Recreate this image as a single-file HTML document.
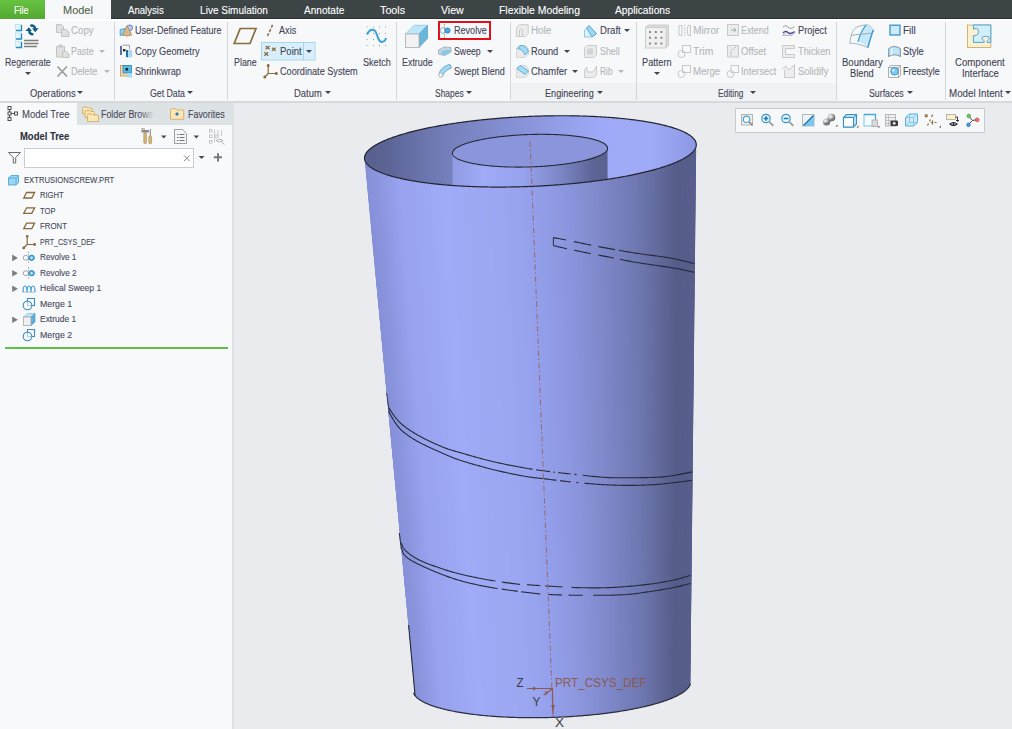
<!DOCTYPE html>
<html><head><meta charset="utf-8">
<style>
html,body{margin:0;padding:0;width:1012px;height:729px;overflow:hidden;background:#e9ebee;font-family:"Liberation Sans",sans-serif;}
#root{position:relative;width:1012px;height:729px;overflow:hidden;}
.a{position:absolute;}
.t{position:absolute;white-space:nowrap;line-height:1;font-family:"Liberation Sans",sans-serif;transform-origin:0 0;-webkit-text-stroke:0.1px currentColor;}
.sep{position:absolute;width:1px;background:#d3d6d9;top:22px;height:78px;}
.arr{position:absolute;width:0;height:0;border-left:3px solid transparent;border-right:3px solid transparent;border-top:3px solid #4a4c55;}
svg{position:absolute;overflow:visible;}
</style></head><body><div id="root">
<div class="a" style="left:0;top:0;width:1012px;height:19px;background:#3c4446;"></div>
<div class="a" style="left:0;top:0;width:45px;height:19px;background:linear-gradient(#66c341,#54a831);"></div>
<div class="a" style="left:45px;top:0;width:66px;height:19px;background:#f7f8f9;"></div>
<div class="a" style="left:0;top:19px;width:1012px;height:82px;background:#f7f8f9;"></div>
<div class="a" style="left:511px;top:83px;width:325px;height:18px;background:#f0f2f4;"></div>
<div class="a" style="left:111px;top:18px;width:901px;height:1px;background:#2c3234;"></div>
<div class="a" style="left:0;top:19px;width:1012px;height:2px;background:#ffffff;"></div>
<div class="a" style="left:0;top:101px;width:1012px;height:2px;background:#d6dadd;"></div>
<!-- graphics area -->
<div class="a" style="left:234px;top:103px;width:778px;height:626px;background:#e9ebee;"></div>
<svg class="a" style="left:0;top:0" width="1012" height="729" viewBox="0 0 1012 729">
<defs>
<clipPath id="bodyclip"><polygon points="364.55,158.41 364.54,157.95 364.57,157.49 364.62,157.03 364.70,156.56 364.81,156.10 364.95,155.63 365.11,155.17 365.31,154.70 365.53,154.23 365.79,153.77 366.07,153.30 366.37,152.83 366.71,152.36 367.08,151.89 367.47,151.42 367.89,150.95 368.34,150.49 368.82,150.02 369.33,149.55 369.86,149.08 370.42,148.61 371.01,148.15 371.63,147.68 372.27,147.21 372.95,146.75 373.64,146.28 374.37,145.82 375.12,145.36 375.90,144.90 376.71,144.44 377.54,143.98 378.40,143.52 379.29,143.06 380.20,142.61 381.14,142.15 382.10,141.70 383.09,141.25 384.10,140.80 385.14,140.36 386.21,139.91 387.30,139.47 388.41,139.03 389.55,138.59 390.72,138.15 391.90,137.72 393.11,137.29 394.35,136.86 395.61,136.43 396.89,136.01 398.19,135.59 399.52,135.17 400.87,134.75 402.25,134.34 403.64,133.93 405.06,133.52 406.50,133.12 407.96,132.72 409.44,132.32 410.94,131.92 412.46,131.53 414.01,131.14 415.57,130.76 417.15,130.38 418.75,130.00 420.38,129.63 422.02,129.26 423.68,128.89 425.35,128.53 427.05,128.18 428.77,127.82 430.50,127.47 432.25,127.13 434.01,126.79 435.79,126.45 437.59,126.12 439.41,125.79 441.24,125.46 443.08,125.14 444.95,124.83 446.82,124.52 448.71,124.21 450.62,123.91 452.53,123.61 454.47,123.32 456.41,123.04 458.37,122.75 460.34,122.48 462.32,122.21 464.31,121.94 466.32,121.68 468.34,121.42 470.36,121.17 472.40,120.92 474.45,120.68 476.50,120.45 478.57,120.22 480.65,119.99 482.73,119.77 484.82,119.56 486.92,119.35 489.03,119.15 491.15,118.95 493.27,118.76 495.39,118.57 497.53,118.39 499.67,118.22 501.81,118.05 503.96,117.89 506.12,117.73 508.28,117.58 510.44,117.43 512.61,117.29 514.77,117.16 516.95,117.03 519.12,116.91 521.30,116.79 523.47,116.68 525.65,116.58 527.83,116.48 530.01,116.39 532.19,116.30 534.37,116.22 536.55,116.15 538.73,116.08 540.91,116.02 543.08,115.96 545.25,115.91 547.42,115.87 549.59,115.83 551.75,115.80 553.91,115.77 556.07,115.76 558.22,115.74 560.37,115.74 562.51,115.74 564.65,115.74 566.78,115.75 568.90,115.77 571.02,115.80 573.13,115.83 575.23,115.86 577.33,115.91 579.41,115.96 581.49,116.01 583.56,116.07 585.62,116.14 587.67,116.21 589.71,116.29 591.74,116.38 593.76,116.47 595.77,116.57 597.77,116.67 599.76,116.78 601.73,116.89 603.69,117.02 605.64,117.14 607.58,117.28 609.50,117.42 611.41,117.56 613.31,117.71 615.19,117.87 617.06,118.03 618.91,118.20 620.74,118.37 622.56,118.55 624.37,118.74 626.16,118.93 627.93,119.13 629.68,119.33 631.42,119.54 633.14,119.75 634.84,119.97 636.53,120.19 638.19,120.42 639.84,120.66 641.47,120.90 643.08,121.15 644.67,121.40 646.24,121.65 647.79,121.91 649.32,122.18 650.83,122.45 652.32,122.73 653.79,123.01 655.23,123.29 656.66,123.59 658.06,123.88 659.44,124.18 660.80,124.49 662.14,124.80 663.45,125.11 664.74,125.43 666.01,125.75 667.25,126.08 668.47,126.41 669.67,126.75 670.84,127.09 671.98,127.44 673.11,127.79 674.21,128.14 675.28,128.50 676.33,128.86 677.35,129.22 678.35,129.59 679.32,129.97 680.27,130.34 681.19,130.72 682.09,131.11 682.95,131.49 683.80,131.88 684.61,132.28 685.40,132.68 686.16,133.08 686.90,133.48 687.61,133.89 688.29,134.30 688.94,134.71 689.57,135.13 690.17,135.54 690.74,135.97 691.28,136.39 691.80,136.82 692.29,137.24 692.75,137.68 693.18,138.11 693.59,138.55 693.96,138.98 694.31,139.43 694.63,139.87 694.92,140.31 695.18,140.76 695.41,141.21 695.62,141.66 695.80,142.11 695.95,142.56 696.06,143.02 696.16,143.47 696.22,143.93 696.25,144.39 690.30,684.22 690.28,684.28 690.27,684.34 690.25,684.40 690.22,684.46 690.20,684.52 690.18,684.57 690.16,684.63 690.14,684.69 690.11,684.75 690.09,684.81 690.07,684.87 690.04,684.93 690.02,684.99 689.99,685.05 689.97,685.10 689.94,685.16 689.91,685.22 689.89,685.28 689.86,685.34 689.83,685.40 689.80,685.46 689.77,685.52 689.74,685.58 689.71,685.63 689.68,685.69 689.65,685.75 689.62,685.81 689.59,685.87 689.55,685.93 689.52,685.99 689.49,686.05 689.45,686.10 689.42,686.16 689.38,686.22 689.35,686.28 689.31,686.34 689.28,686.40 689.24,686.46 689.20,686.52 689.16,686.58 689.12,686.63 689.09,686.69 689.05,686.75 689.01,686.81 688.97,686.87 688.93,686.93 688.88,686.99 688.84,687.05 688.80,687.11 688.76,687.16 688.71,687.22 688.67,687.28 688.63,687.34 688.58,687.40 688.54,687.46 688.49,687.52 688.45,687.58 688.40,687.64 688.35,687.69 688.30,687.75 688.26,687.81 688.21,687.87 688.16,687.93 688.11,687.99 688.06,688.05 688.01,688.11 687.96,688.16 687.91,688.22 687.86,688.28 687.80,688.34 687.75,688.40 687.70,688.46 687.64,688.52 687.59,688.58 687.53,688.63 687.48,688.69 687.42,688.75 687.37,688.81 687.31,688.87 687.25,688.93 687.20,688.99 687.14,689.05 687.08,689.10 687.02,689.16 686.96,689.22 686.90,689.28 686.84,689.34 686.78,689.40 686.72,689.46 686.66,689.51 686.60,689.57 686.53,689.63 686.47,689.69 686.41,689.75 686.34,689.81 686.28,689.87 686.21,689.92 686.15,689.98 686.08,690.04 686.01,690.10 685.95,690.16 685.88,690.22 685.81,690.27 685.74,690.33 685.67,690.39 685.61,690.45 685.54,690.51 685.47,690.57 685.39,690.63 685.32,690.68 685.25,690.74 685.18,690.80 685.11,690.86 685.03,690.92 684.96,690.97 684.89,691.03 684.81,691.09 684.74,691.15 684.66,691.21 684.59,691.27 684.51,691.32 684.43,691.38 684.36,691.44 684.28,691.50 684.20,691.56 684.12,691.61 684.04,691.67 683.96,691.73 683.88,691.79 683.80,691.85 683.72,691.90 683.64,691.96 683.56,692.02 683.48,692.08 683.39,692.14 683.31,692.19 683.23,692.25 683.14,692.31 683.06,692.37 682.97,692.42 682.89,692.48 682.80,692.54 682.71,692.60 682.63,692.66 682.54,692.71 682.45,692.77 682.36,692.83 682.28,692.89 682.19,692.94 682.10,693.00 682.01,693.06 681.92,693.12 681.83,693.17 681.73,693.23 681.64,693.29 681.55,693.35 681.46,693.40 681.36,693.46 681.27,693.52 681.18,693.57 681.08,693.63 680.99,693.69 680.89,693.75 680.79,693.80 680.70,693.86 680.60,693.92 680.50,693.97 680.41,694.03 680.31,694.09 680.21,694.15 680.11,694.20 680.01,694.26 679.91,694.32 679.81,694.37 679.71,694.43 679.61,694.49 679.51,694.54 679.40,694.60 679.30,694.66 679.20,694.71 679.09,694.77 678.99,694.83 678.88,694.88 678.78,694.94 678.67,695.00 678.57,695.05 678.46,695.11 678.36,695.17 678.25,695.22 678.14,695.28 678.03,695.34 677.92,695.39 677.82,695.45 677.71,695.51 677.60,695.56 677.49,695.62 677.38,695.67 677.26,695.73 677.15,695.79 677.04,695.84 676.93,695.90 676.82,695.95 676.70,696.01 676.59,696.07 676.47,696.12 676.36,696.18 676.24,696.23 676.13,696.29 676.01,696.35 675.90,696.40 675.78,696.46 675.66,696.51 675.54,696.57 675.43,696.62 675.31,696.68 675.19,696.74 675.07,696.79 674.95,696.85 674.83,696.90 674.71,696.96 674.59,697.01 674.47,697.07 674.34,697.12 674.22,697.18 674.10,697.23 673.98,697.29 673.85,697.34 673.73,697.40 673.60,697.45 673.48,697.51 673.35,697.56 673.23,697.62 673.10,697.67 672.97,697.73 672.85,697.78 672.72,697.84 672.59,697.89 672.46,697.95 672.33,698.00 672.20,698.06 672.07,698.11 671.94,698.17 671.81,698.22 671.68,698.28 671.55,698.33 671.42,698.38 671.29,698.44 671.16,698.49 671.02,698.55 670.89,698.60 670.76,698.65 670.62,698.71 670.49,698.76 670.35,698.82 670.22,698.87 670.08,698.92 669.94,698.98 669.81,699.03 669.67,699.09 669.53,699.14 669.39,699.19 669.26,699.25 669.12,699.30 668.98,699.35 668.84,699.41 668.70,699.46 668.56,699.52 668.42,699.57 668.28,699.62 668.13,699.68 667.99,699.73 667.85,699.78 667.71,699.83 667.56,699.89 667.42,699.94 667.28,699.99 667.13,700.05 666.99,700.10 666.84,700.15 666.70,700.21 666.55,700.26 666.40,700.31 666.26,700.36 666.11,700.42 665.96,700.47 665.81,700.52 665.66,700.57 665.51,700.63 665.37,700.68 665.22,700.73 665.07,700.78 664.92,700.84 664.76,700.89 664.61,700.94 664.46,700.99 664.31,701.04 664.16,701.10 664.00,701.15 663.85,701.20 663.70,701.25 663.54,701.30 663.39,701.35 663.23,701.41 663.08,701.46 662.92,701.51 662.77,701.56 662.61,701.61 662.45,701.66 662.30,701.71 662.14,701.77 661.98,701.82 661.82,701.87 661.66,701.92 661.50,701.97 661.35,702.02 661.19,702.07 661.03,702.12 660.86,702.17 660.70,702.22 660.54,702.28 660.38,702.33 660.22,702.38 660.06,702.43 659.89,702.48 659.73,702.53 659.57,702.58 659.40,702.63 659.24,702.68 659.07,702.73 658.91,702.78 658.74,702.83 658.58,702.88 658.41,702.93 658.24,702.98 658.08,703.03 657.91,703.08 657.74,703.13 657.57,703.18 657.40,703.23 657.24,703.28 657.07,703.33 656.90,703.38 656.73,703.43 656.56,703.47 656.39,703.52 656.21,703.57 656.04,703.62 655.87,703.67 655.70,703.72 655.53,703.77 655.35,703.82 655.18,703.87 655.01,703.92 654.83,703.96 654.66,704.01 654.48,704.06 654.31,704.11 654.13,704.16 653.96,704.21 653.78,704.26 653.60,704.30 653.43,704.35 653.25,704.40 653.07,704.45 652.90,704.50 652.72,704.54 652.54,704.59 652.36,704.64 652.18,704.69 652.00,704.74 651.82,704.78 651.64,704.83 651.46,704.88 651.28,704.93 651.10,704.97 650.91,705.02 650.73,705.07 650.55,705.11 650.37,705.16 650.18,705.21 650.00,705.26 649.82,705.30 649.63,705.35 649.45,705.40 649.26,705.44 649.08,705.49 648.89,705.54 648.71,705.58 648.52,705.63 648.33,705.68 648.15,705.72 647.96,705.77 647.77,705.81 647.58,705.86 647.40,705.91 647.21,705.95 647.02,706.00 646.83,706.04 646.64,706.09 646.45,706.13 646.26,706.18 646.07,706.23 645.88,706.27 645.69,706.32 645.50,706.36 645.30,706.41 645.11,706.45 644.92,706.50 644.73,706.54 644.53,706.59 644.34,706.63 644.14,706.68 643.95,706.72 643.76,706.77 643.56,706.81 643.37,706.86 643.17,706.90 642.98,706.94 642.78,706.99 642.58,707.03 642.39,707.08 642.19,707.12 641.99,707.17 641.79,707.21 641.60,707.25 641.40,707.30 641.20,707.34 641.00,707.38 640.80,707.43 640.60,707.47 640.40,707.52 640.20,707.56 640.00,707.60 639.80,707.65 639.60,707.69 639.40,707.73 639.20,707.77 638.99,707.82 638.79,707.86 638.59,707.90 638.39,707.95 638.18,707.99 637.98,708.03 637.77,708.07 637.57,708.12 637.37,708.16 637.16,708.20 636.96,708.24 636.75,708.28 636.55,708.33 636.34,708.37 636.13,708.41 635.93,708.45 635.72,708.49 635.51,708.53 635.31,708.58 635.10,708.62 634.89,708.66 634.68,708.70 634.47,708.74 634.26,708.78 634.06,708.82 633.85,708.86 633.64,708.91 633.43,708.95 633.22,708.99 633.00,709.03 632.79,709.07 632.58,709.11 632.37,709.15 632.16,709.19 631.95,709.23 631.74,709.27 631.52,709.31 631.31,709.35 631.10,709.39 630.88,709.43 630.67,709.47 630.46,709.51 630.24,709.55 630.03,709.59 629.81,709.63 629.60,709.67 629.38,709.71 629.17,709.75 628.95,709.79 628.73,709.82 628.52,709.86 628.30,709.90 628.08,709.94 627.87,709.98 627.65,710.02 627.43,710.06 627.21,710.10 627.00,710.13 626.78,710.17 626.56,710.21 626.34,710.25 626.12,710.29 625.90,710.32 625.68,710.36 625.46,710.40 625.24,710.44 625.02,710.48 624.80,710.51 624.58,710.55 624.36,710.59 624.14,710.62 623.91,710.66 623.69,710.70 623.47,710.74 623.25,710.77 623.02,710.81 622.80,710.85 622.58,710.88 622.35,710.92 622.13,710.96 621.91,710.99 621.68,711.03 621.46,711.07 621.23,711.10 621.01,711.14 620.78,711.17 620.56,711.21 620.33,711.25 620.10,711.28 619.88,711.32 619.65,711.35 619.42,711.39 619.20,711.42 618.97,711.46 618.74,711.49 618.51,711.53 618.29,711.56 618.06,711.60 617.83,711.63 617.60,711.67 617.37,711.70 617.14,711.74 616.91,711.77 616.69,711.81 616.46,711.84 616.23,711.87 616.00,711.91 615.76,711.94 615.53,711.98 615.30,712.01 615.07,712.04 614.84,712.08 614.61,712.11 614.38,712.15 614.15,712.18 613.91,712.21 613.68,712.25 613.45,712.28 613.22,712.31 612.98,712.34 612.75,712.38 612.52,712.41 612.28,712.44 612.05,712.48 611.81,712.51 611.58,712.54 611.34,712.57 611.11,712.60 610.87,712.64 610.64,712.67 610.40,712.70 610.17,712.73 609.93,712.76 609.70,712.80 609.46,712.83 609.22,712.86 608.99,712.89 608.75,712.92 608.51,712.95 608.28,712.98 608.04,713.01 607.80,713.05 607.56,713.08 607.33,713.11 607.09,713.14 606.85,713.17 606.61,713.20 606.37,713.23 606.13,713.26 605.89,713.29 605.65,713.32 605.42,713.35 605.18,713.38 604.94,713.41 604.70,713.44 604.46,713.47 604.22,713.50 603.97,713.53 603.73,713.56 603.49,713.59 603.25,713.61 603.01,713.64 602.77,713.67 602.53,713.70 602.29,713.73 602.04,713.76 601.80,713.79 601.56,713.82 601.32,713.84 601.07,713.87 600.83,713.90 600.59,713.93 600.34,713.96 600.10,713.98 599.86,714.01 599.61,714.04 599.37,714.07 599.13,714.09 598.88,714.12 598.64,714.15 598.39,714.18 598.15,714.20 597.90,714.23 597.66,714.26 597.41,714.28 597.17,714.31 596.92,714.34 596.68,714.36 596.43,714.39 596.18,714.42 595.94,714.44 595.69,714.47 595.44,714.49 595.20,714.52 594.95,714.55 594.70,714.57 594.46,714.60 594.21,714.62 593.96,714.65 593.71,714.67 593.47,714.70 593.22,714.72 592.97,714.75 592.72,714.77 592.47,714.80 592.23,714.82 591.98,714.85 591.73,714.87 591.48,714.90 591.23,714.92 590.98,714.95 590.73,714.97 590.48,714.99 590.23,715.02 589.98,715.04 589.73,715.07 589.48,715.09 589.23,715.11 588.98,715.14 588.73,715.16 588.48,715.18 588.23,715.21 587.98,715.23 587.73,715.25 587.48,715.27 587.23,715.30 586.98,715.32 586.73,715.34 586.48,715.36 586.22,715.39 585.97,715.41 585.72,715.43 585.47,715.45 585.22,715.47 584.96,715.50 584.71,715.52 584.46,715.54 584.21,715.56 583.95,715.58 583.70,715.60 583.45,715.62 583.20,715.65 582.94,715.67 582.69,715.69 582.44,715.71 582.18,715.73 581.93,715.75 581.68,715.77 581.42,715.79 581.17,715.81 580.92,715.83 580.66,715.85 580.41,715.87 580.15,715.89 579.90,715.91 579.64,715.93 579.39,715.95 579.14,715.97 578.88,715.99 578.63,716.01 578.37,716.03 578.12,716.04 577.86,716.06 577.61,716.08 577.35,716.10 577.10,716.12 576.84,716.14 576.58,716.16 576.33,716.17 576.07,716.19 575.82,716.21 575.56,716.23 575.31,716.25 575.05,716.26 574.79,716.28 574.54,716.30 574.28,716.32 574.02,716.33 573.77,716.35 573.51,716.37 573.26,716.38 573.00,716.40 572.74,716.42 572.49,716.44 572.23,716.45 571.97,716.47 571.71,716.48 571.46,716.50 571.20,716.52 570.94,716.53 570.69,716.55 570.43,716.56 570.17,716.58 569.91,716.60 569.66,716.61 569.40,716.63 569.14,716.64 568.88,716.66 568.63,716.67 568.37,716.69 568.11,716.70 567.85,716.72 567.59,716.73 567.34,716.75 567.08,716.76 566.82,716.77 566.56,716.79 566.30,716.80 566.05,716.82 565.79,716.83 565.53,716.84 565.27,716.86 565.01,716.87 564.75,716.89 564.49,716.90 564.24,716.91 563.98,716.93 563.72,716.94 563.46,716.95 563.20,716.96 562.94,716.98 562.68,716.99 562.42,717.00 562.17,717.01 561.91,717.03 561.65,717.04 561.39,717.05 561.13,717.06 560.87,717.07 560.61,717.09 560.35,717.10 560.09,717.11 559.83,717.12 559.57,717.13 559.31,717.14 559.06,717.15 558.80,717.17 558.54,717.18 558.28,717.19 558.02,717.20 557.76,717.21 557.50,717.22 557.24,717.23 556.98,717.24 556.72,717.25 556.46,717.26 556.20,717.27 555.94,717.28 555.68,717.29 555.42,717.30 555.16,717.31 554.90,717.32 554.64,717.33 554.38,717.34 554.12,717.34 553.87,717.35 553.61,717.36 553.35,717.37 553.09,717.38 552.83,717.39 552.57,717.40 552.31,717.40 552.05,717.41 551.79,717.42 551.53,717.43 551.27,717.44 551.01,717.44 550.75,717.45 550.49,717.46 550.23,717.47 549.97,717.47 549.71,717.48 549.45,717.49 549.19,717.49 548.93,717.50 548.67,717.51 548.41,717.52 548.15,717.52 547.89,717.53 547.63,717.53 547.37,717.54 547.12,717.55 546.86,717.55 546.60,717.56 546.34,717.56 546.08,717.57 545.82,717.58 545.56,717.58 545.30,717.59 545.04,717.59 544.78,717.60 544.52,717.60 544.26,717.61 544.00,717.61 543.74,717.62 543.48,717.62 543.22,717.62 542.97,717.63 542.71,717.63 542.45,717.64 542.19,717.64 541.93,717.64 541.67,717.65 541.41,717.65 541.15,717.66 540.89,717.66 540.63,717.66 540.38,717.67 540.12,717.67 539.86,717.67 539.60,717.67 539.34,717.68 539.08,717.68 538.82,717.68 538.57,717.69 538.31,717.69 538.05,717.69 537.79,717.69 537.53,717.69 537.27,717.70 537.02,717.70 536.76,717.70 536.50,717.70 536.24,717.70 535.98,717.70 535.73,717.70 535.47,717.71 535.21,717.71 534.95,717.71 534.69,717.71 534.44,717.71 534.18,717.71 533.92,717.71 533.66,717.71 533.41,717.71 533.15,717.71 532.89,717.71 532.64,717.71 532.38,717.71 532.12,717.71 531.86,717.71 531.61,717.71 531.35,717.71 531.09,717.71 530.84,717.71 530.58,717.71 530.32,717.71 530.07,717.70 529.81,717.70 529.56,717.70 529.30,717.70 529.04,717.70 528.79,717.70 528.53,717.69 528.27,717.69 528.02,717.69 527.76,717.69 527.51,717.69 527.25,717.68 527.00,717.68 526.74,717.68 526.49,717.68 526.23,717.67 525.98,717.67 525.72,717.67 525.47,717.66 525.21,717.66 524.96,717.66 524.70,717.65 524.45,717.65 524.19,717.65 523.94,717.64 523.68,717.64 523.43,717.63 523.18,717.63 522.92,717.63 522.67,717.62 522.41,717.62 522.16,717.61 521.91,717.61 521.65,717.60 521.40,717.60 521.15,717.59 520.89,717.59 520.64,717.58 520.39,717.58 520.13,717.57 519.88,717.57 519.63,717.56 519.38,717.55 519.12,717.55 518.87,717.54 518.62,717.54 518.37,717.53 518.12,717.52 517.86,717.52 517.61,717.51 517.36,717.50 517.11,717.50 516.86,717.49 516.61,717.48 516.36,717.48 516.11,717.47 515.85,717.46 515.60,717.45 515.35,717.45 515.10,717.44 514.85,717.43 514.60,717.42 514.35,717.42 514.10,717.41 513.85,717.40 513.60,717.39 513.35,717.38 513.10,717.37 512.86,717.37 512.61,717.36 512.36,717.35 512.11,717.34 511.86,717.33 511.61,717.32 511.36,717.31 511.11,717.30 510.87,717.29 510.62,717.28 510.37,717.27 510.12,717.26 509.88,717.25 509.63,717.24 509.38,717.23 509.13,717.22 508.89,717.21 508.64,717.20 508.39,717.19 508.15,717.18 507.90,717.17 507.65,717.16 507.41,717.15 507.16,717.14 506.92,717.12 506.67,717.11 506.43,717.10 506.18,717.09 505.94,717.08 505.69,717.07 505.45,717.05 505.20,717.04 504.96,717.03 504.71,717.02 504.47,717.01 504.23,716.99 503.98,716.98 503.74,716.97 503.49,716.96 503.25,716.94 503.01,716.93 502.77,716.92 502.52,716.90 502.28,716.89 502.04,716.88 501.80,716.86 501.55,716.85 501.31,716.84 501.07,716.82 500.83,716.81 500.59,716.79 500.35,716.78 500.11,716.77 499.86,716.75 499.62,716.74 499.38,716.72 499.14,716.71 498.90,716.69 498.66,716.68 498.42,716.66 498.18,716.65 497.94,716.63 497.71,716.62 497.47,716.60 497.23,716.59 496.99,716.57 496.75,716.55 496.51,716.54 496.28,716.52 496.04,716.51 495.80,716.49 495.56,716.47 495.33,716.46 495.09,716.44 494.85,716.42 494.62,716.41 494.38,716.39 494.14,716.37 493.91,716.36 493.67,716.34 493.44,716.32 493.20,716.31 492.96,716.29 492.73,716.27 492.50,716.25 492.26,716.23 492.03,716.22 491.79,716.20 491.56,716.18 491.32,716.16 491.09,716.14 490.86,716.13 490.63,716.11 490.39,716.09 490.16,716.07 489.93,716.05 489.70,716.03 489.46,716.01 489.23,715.99 489.00,715.98 488.77,715.96 488.54,715.94 488.31,715.92 488.08,715.90 487.85,715.88 487.62,715.86 487.39,715.84 487.16,715.82 486.93,715.80 486.70,715.78 486.47,715.76 486.24,715.74 486.01,715.72 485.78,715.69 485.55,715.67 485.33,715.65 485.10,715.63 484.87,715.61 484.64,715.59 484.42,715.57 484.19,715.55 483.96,715.53 483.74,715.50 483.51,715.48 483.29,715.46 483.06,715.44 482.83,715.42 482.61,715.39 482.39,715.37 482.16,715.35 481.94,715.33 481.71,715.30 481.49,715.28 481.26,715.26 481.04,715.24 480.82,715.21 480.60,715.19 480.37,715.17 480.15,715.14 479.93,715.12 479.71,715.10 479.49,715.07 479.26,715.05 479.04,715.03 478.82,715.00 478.60,714.98 478.38,714.95 478.16,714.93 477.94,714.91 477.72,714.88 477.50,714.86 477.28,714.83 477.07,714.81 476.85,714.78 476.63,714.76 476.41,714.73 476.19,714.71 475.98,714.68 475.76,714.66 475.54,714.63 475.32,714.61 475.11,714.58 474.89,714.56 474.68,714.53 474.46,714.50 474.25,714.48 474.03,714.45 473.82,714.43 473.60,714.40 473.39,714.37 473.17,714.35 472.96,714.32 472.75,714.29 472.53,714.27 472.32,714.24 472.11,714.21 471.90,714.19 471.68,714.16 471.47,714.13 471.26,714.10 471.05,714.08 470.84,714.05 470.63,714.02 470.42,713.99 470.21,713.97 470.00,713.94 469.79,713.91 469.58,713.88 469.37,713.85 469.16,713.83 468.95,713.80 468.75,713.77 468.54,713.74 468.33,713.71 468.12,713.68 467.92,713.65 467.71,713.63 467.51,713.60 467.30,713.57 467.09,713.54 466.89,713.51 466.68,713.48 466.48,713.45 466.27,713.42 466.07,713.39 465.87,713.36 465.66,713.33 465.46,713.30 465.26,713.27 465.05,713.24 464.85,713.21 464.65,713.18 464.45,713.15 464.25,713.12 464.05,713.09 463.85,713.06 463.64,713.03 463.44,713.00 463.24,712.96 463.05,712.93 462.85,712.90 462.65,712.87 462.45,712.84 462.25,712.81 462.05,712.78 461.85,712.74 461.66,712.71 461.46,712.68 461.26,712.65 461.07,712.62 460.87,712.58 460.68,712.55 460.48,712.52 460.29,712.49 460.09,712.45 459.90,712.42 459.70,712.39 459.51,712.36 459.31,712.32 459.12,712.29 458.93,712.26 458.74,712.22 458.54,712.19 458.35,712.16 458.16,712.12 457.97,712.09 457.78,712.06 457.59,712.02 457.40,711.99 457.21,711.96 457.02,711.92 456.83,711.89 456.64,711.85 456.45,711.82 456.26,711.78 456.08,711.75 455.89,711.72 455.70,711.68 455.51,711.65 455.33,711.61 455.14,711.58 454.96,711.54 454.77,711.51 454.59,711.47 454.40,711.44 454.22,711.40 454.03,711.37 453.85,711.33 453.66,711.29 453.48,711.26 453.30,711.22 453.12,711.19 452.93,711.15 452.75,711.11 452.57,711.08 452.39,711.04 452.21,711.01 452.03,710.97 451.85,710.93 451.67,710.90 451.49,710.86 451.31,710.82 451.13,710.79 450.95,710.75 450.78,710.71 450.60,710.68 450.42,710.64 450.24,710.60 450.07,710.56 449.89,710.53 449.72,710.49 449.54,710.45 449.37,710.41 449.19,710.38 449.02,710.34 448.84,710.30 448.67,710.26 448.50,710.22 448.32,710.19 448.15,710.15 447.98,710.11 447.81,710.07 447.64,710.03 447.47,709.99 447.29,709.96 447.12,709.92 446.95,709.88 446.78,709.84 446.62,709.80 446.45,709.76 446.28,709.72 446.11,709.68 445.94,709.64 445.78,709.60 445.61,709.56 445.44,709.52 445.28,709.48 445.11,709.44 444.94,709.41 444.78,709.37 444.61,709.33 444.45,709.29 444.29,709.24 444.12,709.20 443.96,709.16 443.80,709.12 443.63,709.08 443.47,709.04 443.31,709.00 443.15,708.96 442.99,708.92 442.83,708.88 442.67,708.84 442.51,708.80 442.35,708.76 442.19,708.72 442.03,708.67 441.87,708.63 441.71,708.59 441.56,708.55 441.40,708.51 441.24,708.47 441.09,708.43 440.93,708.38 440.77,708.34 440.62,708.30 440.47,708.26 440.31,708.22 440.16,708.17 440.00,708.13 439.85,708.09 439.70,708.05 439.54,708.00 439.39,707.96 439.24,707.92 439.09,707.88 438.94,707.83 438.79,707.79 438.64,707.75 438.49,707.70 438.34,707.66 438.19,707.62 438.04,707.57 437.89,707.53 437.75,707.49 437.60,707.44 437.45,707.40 437.31,707.36 437.16,707.31 437.01,707.27 436.87,707.23 436.72,707.18 436.58,707.14 436.44,707.09 436.29,707.05 436.15,707.01 436.01,706.96 435.86,706.92 435.72,706.87 435.58,706.83 435.44,706.78 435.30,706.74 435.16,706.69 435.02,706.65 434.88,706.60 434.74,706.56 434.60,706.51 434.46,706.47 434.32,706.42 434.19,706.38 434.05,706.33 433.91,706.29 433.78,706.24 433.64,706.20 433.51,706.15 433.37,706.11 433.24,706.06 433.10,706.01 432.97,705.97 432.83,705.92 432.70,705.88 432.57,705.83 432.44,705.78 432.31,705.74 432.17,705.69 432.04,705.65 431.91,705.60 431.78,705.55 431.65,705.51 431.52,705.46 431.40,705.41 431.27,705.37 431.14,705.32 431.01,705.27 430.88,705.23 430.76,705.18 430.63,705.13 430.51,705.08 430.38,705.04 430.26,704.99 430.13,704.94 430.01,704.90 429.88,704.85 429.76,704.80 429.64,704.75 429.52,704.71 429.39,704.66 429.27,704.61 429.15,704.56 429.03,704.51 428.91,704.47 428.79,704.42 428.67,704.37 428.55,704.32 428.43,704.27 428.32,704.22 428.20,704.18 428.08,704.13 427.96,704.08 427.85,704.03 427.73,703.98 427.62,703.93 427.50,703.89 427.39,703.84 427.27,703.79 427.16,703.74 427.05,703.69 426.93,703.64 426.82,703.59 426.71,703.54 426.60,703.49 426.49,703.44 426.38,703.39 426.27,703.34 426.16,703.30 426.05,703.25 425.94,703.20 425.83,703.15 425.72,703.10 425.61,703.05 425.51,703.00 425.40,702.95 425.29,702.90 425.19,702.85 425.08,702.80 424.98,702.75 424.87,702.70 424.77,702.65 424.67,702.60 424.56,702.55 424.46,702.50 424.36,702.45 424.26,702.40 424.15,702.34 424.05,702.29 423.95,702.24 423.85,702.19 423.75,702.14 423.65,702.09 423.56,702.04 423.46,701.99 423.36,701.94 423.26,701.89 423.17,701.84 423.07,701.78 422.97,701.73 422.88,701.68 422.78,701.63 422.69,701.58 422.59,701.53 422.50,701.48 422.41,701.42 422.31,701.37 422.22,701.32 422.13,701.27 422.04,701.22 421.95,701.17 421.86,701.11 421.77,701.06 421.68,701.01 421.59,700.96 421.50,700.91 421.41,700.85 421.32,700.80 421.24,700.75 421.15,700.70 421.06,700.65 420.98,700.59 420.89,700.54 420.81,700.49 420.72,700.44 420.64,700.38 420.56,700.33 420.47,700.28 420.39,700.22 420.31,700.17 420.23,700.12 420.14,700.07 420.06,700.01 419.98,699.96 419.90,699.91 419.82,699.85 419.75,699.80 419.67,699.75 419.59,699.69 419.51,699.64 419.43,699.59 419.36,699.53 419.28,699.48 419.21,699.43 419.13,699.37 419.05,699.32 418.98,699.27 418.91,699.21 418.83,699.16 418.76,699.11 418.69,699.05 418.62,699.00 418.54,698.94 418.47,698.89 418.40,698.84 418.33,698.78 418.26,698.73 418.19,698.67 418.12,698.62 418.06,698.57 417.99,698.51 417.92,698.46 417.85,698.40 417.79,698.35 417.72,698.30 417.66,698.24 417.59,698.19 417.53,698.13 417.46,698.08 417.40,698.02 417.34,697.97 417.27,697.91 417.21,697.86 417.15,697.80 417.09,697.75 417.03,697.69 416.97,697.64 416.91,697.58 416.85,697.53 416.79,697.47 416.73,697.42 416.67,697.36 416.62,697.31 416.56,697.25 416.50,697.20 416.45,697.14 416.39,697.09 416.34,697.03 416.28,696.98 416.23,696.92 416.17,696.87 416.12,696.81 416.07,696.76 416.02,696.70 415.96,696.64 415.91,696.59 415.86,696.53 415.81,696.48 415.76,696.42 415.71,696.37 415.66,696.31 415.62,696.25 415.57,696.20 415.52,696.14 415.47,696.09 415.43,696.03 415.38,695.98 415.34,695.92 415.29,695.86 415.25,695.81 415.20,695.75 415.16,695.69 415.11,695.64"/></clipPath>
<clipPath id="topclip"><polygon points="696.25,144.39 696.26,144.70 696.25,145.00 696.23,145.31 696.20,145.62 696.16,145.92 696.10,146.23 696.03,146.54 695.95,146.85 695.86,147.16 695.75,147.47 695.63,147.77 695.50,148.08 695.35,148.39 695.20,148.70 695.03,149.02 694.84,149.33 694.65,149.64 694.44,149.95 694.22,150.26 693.99,150.57 693.74,150.88 693.49,151.19 693.22,151.50 692.93,151.81 692.64,152.13 692.33,152.44 692.01,152.75 691.68,153.06 691.34,153.37 690.98,153.68 690.61,153.99 690.23,154.30 689.84,154.61 689.44,154.92 689.02,155.23 688.59,155.54 688.15,155.85 687.70,156.16 687.23,156.47 686.76,156.77 686.27,157.08 685.77,157.39 685.25,157.69 684.73,158.00 684.19,158.31 683.64,158.61 683.09,158.92 682.51,159.22 681.93,159.52 681.34,159.83 680.73,160.13 680.11,160.43 679.49,160.73 678.85,161.03 678.19,161.33 677.53,161.63 676.86,161.93 676.17,162.22 675.48,162.52 674.77,162.81 674.05,163.11 673.32,163.40 672.58,163.69 671.83,163.99 671.07,164.28 670.30,164.57 669.52,164.86 668.72,165.14 667.92,165.43 667.11,165.72 666.28,166.00 665.45,166.28 664.60,166.57 663.74,166.85 662.88,167.13 662.00,167.41 661.12,167.68 660.22,167.96 659.32,168.23 658.40,168.51 657.47,168.78 656.54,169.05 655.60,169.32 654.64,169.59 653.68,169.86 652.70,170.12 651.72,170.39 650.73,170.65 649.73,170.91 648.72,171.17 647.70,171.43 646.67,171.69 645.64,171.94 644.59,172.19 643.54,172.45 642.47,172.70 641.40,172.95 640.32,173.19 639.24,173.44 638.14,173.68 637.04,173.92 635.92,174.16 634.80,174.40 633.67,174.64 632.54,174.88 631.39,175.11 630.24,175.34 629.08,175.57 627.91,175.80 626.74,176.02 625.56,176.25 624.37,176.47 623.17,176.69 621.97,176.91 620.76,177.13 619.54,177.34 618.32,177.55 617.09,177.76 615.85,177.97 614.61,178.18 613.36,178.38 612.10,178.59 610.84,178.79 609.57,178.98 608.29,179.18 607.01,179.38 605.73,179.57 604.43,179.76 603.13,179.94 601.83,180.13 600.52,180.31 599.21,180.49 597.89,180.67 596.56,180.85 595.23,181.02 593.90,181.20 592.56,181.37 591.22,181.53 589.87,181.70 588.51,181.86 587.16,182.02 585.79,182.18 584.43,182.34 583.06,182.49 581.68,182.64 580.30,182.79 578.92,182.94 577.54,183.08 576.15,183.22 574.75,183.36 573.36,183.50 571.96,183.63 570.55,183.77 569.15,183.90 567.74,184.02 566.33,184.15 564.91,184.27 563.50,184.39 562.08,184.51 560.66,184.62 559.23,184.73 557.80,184.84 556.38,184.95 554.95,185.05 553.51,185.15 552.08,185.25 550.64,185.35 549.21,185.44 547.77,185.54 546.33,185.62 544.89,185.71 543.44,185.79 542.00,185.88 540.56,185.95 539.11,186.03 537.67,186.10 536.22,186.17 534.77,186.24 533.33,186.31 531.88,186.37 530.43,186.43 528.98,186.49 527.54,186.54 526.09,186.59 524.64,186.64 523.20,186.69 521.75,186.73 520.31,186.77 518.86,186.81 517.42,186.85 515.97,186.88 514.53,186.91 513.09,186.94 511.65,186.96 510.22,186.98 508.78,187.00 507.35,187.02 505.91,187.03 504.48,187.05 503.06,187.05 501.63,187.06 500.20,187.06 498.78,187.06 497.36,187.06 495.95,187.06 494.53,187.05 493.12,187.04 491.71,187.03 490.30,187.01 488.90,186.99 487.50,186.97 486.11,186.95 484.71,186.92 483.32,186.89 481.94,186.86 480.55,186.82 479.18,186.79 477.80,186.75 476.43,186.70 475.06,186.66 473.70,186.61 472.34,186.56 470.99,186.50 469.64,186.45 468.30,186.39 466.96,186.33 465.62,186.26 464.29,186.20 462.97,186.13 461.65,186.05 460.33,185.98 459.02,185.90 457.72,185.82 456.42,185.74 455.13,185.65 453.84,185.57 452.56,185.48 451.29,185.38 450.02,185.29 448.75,185.19 447.50,185.09 446.25,184.98 445.00,184.88 443.77,184.77 442.53,184.66 441.31,184.54 440.09,184.43 438.88,184.31 437.68,184.19 436.48,184.07 435.29,183.94 434.11,183.81 432.94,183.68 431.77,183.55 430.61,183.41 429.46,183.27 428.31,183.13 427.17,182.99 426.05,182.84 424.92,182.69 423.81,182.54 422.71,182.39 421.61,182.23 420.52,182.08 419.44,181.92 418.37,181.75 417.31,181.59 416.25,181.42 415.21,181.25 414.17,181.08 413.14,180.91 412.12,180.73 411.11,180.56 410.11,180.37 409.12,180.19 408.14,180.01 407.16,179.82 406.20,179.63 405.24,179.44 404.30,179.25 403.36,179.05 402.44,178.85 401.52,178.65 400.62,178.45 399.72,178.25 398.83,178.04 397.96,177.83 397.09,177.62 396.24,177.41 395.39,177.20 394.55,176.98 393.73,176.77 392.91,176.55 392.11,176.32 391.32,176.10 390.53,175.87 389.76,175.65 389.00,175.42 388.25,175.19 387.51,174.95 386.78,174.72 386.06,174.48 385.35,174.25 384.66,174.01 383.97,173.76 383.30,173.52 382.63,173.28 381.98,173.03 381.34,172.78 380.71,172.53 380.09,172.28 379.49,172.03 378.89,171.77 378.31,171.52 377.74,171.26 377.18,171.00 376.63,170.74 376.09,170.48 375.57,170.21 375.06,169.95 374.55,169.68 374.07,169.41 373.59,169.14 373.12,168.87 372.67,168.60 372.23,168.33 371.80,168.05 371.38,167.78 370.97,167.50 370.58,167.22 370.20,166.94 369.83,166.66 369.48,166.38 369.13,166.10 368.80,165.81 368.48,165.53 368.17,165.24 367.88,164.95 367.59,164.66 367.32,164.38 367.07,164.08 366.82,163.79 366.59,163.50 366.37,163.21 366.16,162.91 365.96,162.62 365.78,162.32 365.61,162.03 365.45,161.73 365.31,161.43 365.18,161.13 365.06,160.83 364.95,160.53 364.85,160.23 364.77,159.93 364.70,159.63 364.64,159.32 364.60,159.02 364.57,158.71 364.55,158.41 364.54,158.10 364.55,157.80 364.57,157.49 364.60,157.18 364.64,156.88 364.70,156.57 364.77,156.26 364.85,155.95 364.94,155.64 365.05,155.33 365.17,155.03 365.30,154.72 365.45,154.41 365.60,154.10 365.77,153.78 365.96,153.47 366.15,153.16 366.36,152.85 366.58,152.54 366.81,152.23 367.06,151.92 367.31,151.61 367.58,151.30 367.87,150.99 368.16,150.67 368.47,150.36 368.79,150.05 369.12,149.74 369.46,149.43 369.82,149.12 370.19,148.81 370.57,148.50 370.96,148.19 371.36,147.88 371.78,147.57 372.21,147.26 372.65,146.95 373.10,146.64 373.57,146.33 374.04,146.03 374.53,145.72 375.03,145.41 375.55,145.11 376.07,144.80 376.61,144.49 377.16,144.19 377.71,143.88 378.29,143.58 378.87,143.28 379.46,142.97 380.07,142.67 380.69,142.37 381.31,142.07 381.95,141.77 382.61,141.47 383.27,141.17 383.94,140.87 384.63,140.58 385.32,140.28 386.03,139.99 386.75,139.69 387.48,139.40 388.22,139.11 388.97,138.81 389.73,138.52 390.50,138.23 391.28,137.94 392.08,137.66 392.88,137.37 393.69,137.08 394.52,136.80 395.35,136.52 396.20,136.23 397.06,135.95 397.92,135.67 398.80,135.39 399.68,135.12 400.58,134.84 401.48,134.57 402.40,134.29 403.33,134.02 404.26,133.75 405.20,133.48 406.16,133.21 407.12,132.94 408.10,132.68 409.08,132.41 410.07,132.15 411.07,131.89 412.08,131.63 413.10,131.37 414.13,131.11 415.16,130.86 416.21,130.61 417.26,130.35 418.33,130.10 419.40,129.85 420.48,129.61 421.56,129.36 422.66,129.12 423.76,128.88 424.88,128.64 426.00,128.40 427.13,128.16 428.26,127.92 429.41,127.69 430.56,127.46 431.72,127.23 432.89,127.00 434.06,126.78 435.24,126.55 436.43,126.33 437.63,126.11 438.83,125.89 440.04,125.67 441.26,125.46 442.48,125.25 443.71,125.04 444.95,124.83 446.19,124.62 447.44,124.42 448.70,124.21 449.96,124.01 451.23,123.82 452.51,123.62 453.79,123.42 455.07,123.23 456.37,123.04 457.67,122.86 458.97,122.67 460.28,122.49 461.59,122.31 462.91,122.13 464.24,121.95 465.57,121.78 466.90,121.60 468.24,121.43 469.58,121.27 470.93,121.10 472.29,120.94 473.64,120.78 475.01,120.62 476.37,120.46 477.74,120.31 479.12,120.16 480.50,120.01 481.88,119.86 483.26,119.72 484.65,119.58 486.05,119.44 487.44,119.30 488.84,119.17 490.25,119.03 491.65,118.90 493.06,118.78 494.47,118.65 495.89,118.53 497.30,118.41 498.72,118.29 500.14,118.18 501.57,118.07 503.00,117.96 504.42,117.85 505.85,117.75 507.29,117.65 508.72,117.55 510.16,117.45 511.59,117.36 513.03,117.26 514.47,117.18 515.91,117.09 517.36,117.01 518.80,116.92 520.24,116.85 521.69,116.77 523.13,116.70 524.58,116.63 526.03,116.56 527.47,116.49 528.92,116.43 530.37,116.37 531.82,116.31 533.26,116.26 534.71,116.21 536.16,116.16 537.60,116.11 539.05,116.07 540.49,116.03 541.94,115.99 543.38,115.95 544.83,115.92 546.27,115.89 547.71,115.86 549.15,115.84 550.58,115.82 552.02,115.80 553.45,115.78 554.89,115.77 556.32,115.75 557.74,115.75 559.17,115.74 560.60,115.74 562.02,115.74 563.44,115.74 564.85,115.74 566.27,115.75 567.68,115.76 569.09,115.77 570.50,115.79 571.90,115.81 573.30,115.83 574.69,115.85 576.09,115.88 577.48,115.91 578.86,115.94 580.25,115.98 581.62,116.01 583.00,116.05 584.37,116.10 585.74,116.14 587.10,116.19 588.46,116.24 589.81,116.30 591.16,116.35 592.50,116.41 593.84,116.47 595.18,116.54 596.51,116.60 597.83,116.67 599.15,116.75 600.47,116.82 601.78,116.90 603.08,116.98 604.38,117.06 605.67,117.15 606.96,117.23 608.24,117.32 609.51,117.42 610.78,117.51 612.05,117.61 613.30,117.71 614.55,117.82 615.80,117.92 617.03,118.03 618.27,118.14 619.49,118.26 620.71,118.37 621.92,118.49 623.12,118.61 624.32,118.73 625.51,118.86 626.69,118.99 627.86,119.12 629.03,119.25 630.19,119.39 631.34,119.53 632.49,119.67 633.63,119.81 634.75,119.96 635.88,120.11 636.99,120.26 638.09,120.41 639.19,120.57 640.28,120.72 641.36,120.88 642.43,121.05 643.49,121.21 644.55,121.38 645.59,121.55 646.63,121.72 647.66,121.89 648.68,122.07 649.69,122.24 650.69,122.43 651.68,122.61 652.66,122.79 653.64,122.98 654.60,123.17 655.56,123.36 656.50,123.55 657.44,123.75 658.36,123.95 659.28,124.15 660.18,124.35 661.08,124.55 661.97,124.76 662.84,124.97 663.71,125.18 664.56,125.39 665.41,125.60 666.25,125.82 667.07,126.03 667.89,126.25 668.69,126.48 669.48,126.70 670.27,126.93 671.04,127.15 671.80,127.38 672.55,127.61 673.29,127.85 674.02,128.08 674.74,128.32 675.45,128.55 676.14,128.79 676.83,129.04 677.50,129.28 678.17,129.52 678.82,129.77 679.46,130.02 680.09,130.27 680.71,130.52 681.31,130.77 681.91,131.03 682.49,131.28 683.06,131.54 683.62,131.80 684.17,132.06 684.71,132.32 685.23,132.59 685.74,132.85 686.25,133.12 686.73,133.39 687.21,133.66 687.68,133.93 688.13,134.20 688.57,134.47 689.00,134.75 689.42,135.02 689.83,135.30 690.22,135.58 690.60,135.86 690.97,136.14 691.32,136.42 691.67,136.70 692.00,136.99 692.32,137.27 692.63,137.56 692.92,137.85 693.21,138.14 693.48,138.42 693.73,138.72 693.98,139.01 694.21,139.30 694.43,139.59 694.64,139.89 694.84,140.18 695.02,140.48 695.19,140.77 695.35,141.07 695.49,141.37 695.62,141.67 695.74,141.97 695.85,142.27 695.95,142.57 696.03,142.87 696.10,143.17 696.16,143.48 696.20,143.78 696.23,144.09"/></clipPath>
<linearGradient id="gin" gradientUnits="userSpaceOnUse" x1="365" y1="0" x2="697" y2="0"><stop offset="0.0" stop-color="#586090"/><stop offset="0.05" stop-color="#5a6292"/><stop offset="0.18" stop-color="#6b75ae"/><stop offset="0.26" stop-color="#7680bd"/><stop offset="0.5" stop-color="#8a95dc"/><stop offset="0.71" stop-color="#9eaaf7"/><stop offset="0.86" stop-color="#a0abf7"/><stop offset="0.98" stop-color="#909be8"/><stop offset="1.0" stop-color="#8e99e6"/></linearGradient>
<linearGradient id="gis" gradientUnits="userSpaceOnUse" x1="452" y1="0" x2="608.5" y2="0"><stop offset="0.0" stop-color="#8f9ae2"/><stop offset="0.2" stop-color="#a0abf7"/><stop offset="0.45" stop-color="#98a3ef"/><stop offset="0.7" stop-color="#7b85c4"/><stop offset="0.9" stop-color="#5d6597"/><stop offset="1.0" stop-color="#59618f"/></linearGradient>
</defs>
<g clip-path="url(#bodyclip)">
<polygon points="364.54,96.20 362.88,97.84 420.72,737.68 422.07,736.28" fill="#8892da"/>
<polygon points="363.67,97.02 362.18,98.66 420.14,738.39 421.36,736.98" fill="#8892da"/>
<polygon points="362.88,97.84 361.57,99.48 419.64,739.09 420.72,737.68" fill="#8791d9"/>
<polygon points="362.18,98.66 361.04,100.30 419.21,739.80 420.14,738.39" fill="#8791d9"/>
<polygon points="361.57,99.48 360.59,101.12 418.84,740.51 419.64,739.09" fill="#8791d9"/>
<polygon points="361.04,100.30 360.24,101.94 418.55,741.21 419.21,739.80" fill="#8791d9"/>
<polygon points="360.59,101.12 359.97,102.76 418.33,741.92 418.84,740.51" fill="#8690d8"/>
<polygon points="360.24,101.94 359.78,103.57 418.18,742.62 418.55,741.21" fill="#8690d8"/>
<polygon points="359.97,102.76 359.69,104.38 418.09,743.33 418.33,741.92" fill="#8690d8"/>
<polygon points="359.78,103.57 359.68,105.18 418.08,744.03 418.18,742.62" fill="#8690d8"/>
<polygon points="359.69,104.38 359.76,105.99 418.14,744.73 418.09,743.33" fill="#8690d8"/>
<polygon points="359.68,105.18 359.93,106.79 418.27,745.42 418.08,744.03" fill="#8690d8"/>
<polygon points="359.76,105.99 360.18,107.58 418.47,746.12 418.14,744.73" fill="#8690d8"/>
<polygon points="359.93,106.79 360.52,108.37 418.74,746.81 418.27,745.42" fill="#8690d8"/>
<polygon points="360.18,107.58 360.95,109.15 419.08,747.49 418.47,746.12" fill="#8690d8"/>
<polygon points="360.52,108.37 361.47,109.93 419.49,748.17 418.74,746.81" fill="#8690d8"/>
<polygon points="360.95,109.15 362.07,110.70 419.97,748.85 419.08,747.49" fill="#8791d9"/>
<polygon points="361.47,109.93 362.76,111.47 420.51,749.52 419.49,748.17" fill="#8791d9"/>
<polygon points="362.07,110.70 363.53,112.22 421.13,750.19 419.97,748.85" fill="#8791d9"/>
<polygon points="362.76,111.47 364.39,112.97 421.82,750.85 420.51,749.52" fill="#8791d9"/>
<polygon points="363.53,112.22 365.33,113.72 422.57,751.51 421.13,750.19" fill="#8892da"/>
<polygon points="364.39,112.97 366.36,114.45 423.40,752.16 421.82,750.85" fill="#8892da"/>
<polygon points="365.33,113.72 367.47,115.18 424.29,752.81 422.57,751.51" fill="#8892da"/>
<polygon points="366.36,114.45 368.66,115.89 425.25,753.44 423.40,752.16" fill="#8993db"/>
<polygon points="367.47,115.18 369.94,116.60 426.27,754.07 424.29,752.81" fill="#8993db"/>
<polygon points="368.66,115.89 371.30,117.30 427.36,754.70 425.25,753.44" fill="#8a94dc"/>
<polygon points="369.94,116.60 372.74,117.99 428.52,755.31 426.27,754.07" fill="#8a94dc"/>
<polygon points="371.30,117.30 374.26,118.66 429.74,755.92 427.36,754.70" fill="#8b95dd"/>
<polygon points="372.74,117.99 375.86,119.33 431.03,756.52 428.52,755.31" fill="#8c96de"/>
<polygon points="374.26,118.66 377.54,119.99 432.38,757.11 429.74,755.92" fill="#8d97e0"/>
<polygon points="375.86,119.33 379.30,120.63 433.79,757.69 431.03,756.52" fill="#8e98e1"/>
<polygon points="377.54,119.99 381.14,121.26 435.27,758.26 432.38,757.11" fill="#8f99e2"/>
<polygon points="379.30,120.63 383.05,121.88 436.80,758.82 433.79,757.69" fill="#909ae4"/>
<polygon points="381.14,121.26 385.03,122.49 438.40,759.38 435.27,758.26" fill="#919be5"/>
<polygon points="383.05,121.88 387.09,123.09 440.06,759.92 436.80,758.82" fill="#929ce7"/>
<polygon points="385.03,122.49 389.23,123.67 441.78,760.45 438.40,759.38" fill="#939de8"/>
<polygon points="387.09,123.09 391.43,124.24 443.55,760.97 440.06,759.92" fill="#949eea"/>
<polygon points="389.23,123.67 393.71,124.79 445.38,761.48 441.78,760.45" fill="#96a0ec"/>
<polygon points="391.43,124.24 396.06,125.33 447.27,761.98 443.55,760.97" fill="#97a1ee"/>
<polygon points="393.71,124.79 398.47,125.86 449.22,762.47 445.38,761.48" fill="#98a2ef"/>
<polygon points="396.06,125.33 400.95,126.37 451.22,762.94 447.27,761.98" fill="#99a3f0"/>
<polygon points="398.47,125.86 403.50,126.87 453.27,763.40 449.22,762.47" fill="#99a3f0"/>
<polygon points="400.95,126.37 406.11,127.35 455.37,763.86 451.22,762.94" fill="#99a4f0"/>
<polygon points="403.50,126.87 408.79,127.82 457.53,764.29 453.27,763.40" fill="#9aa4f1"/>
<polygon points="406.11,127.35 411.53,128.27 459.73,764.72 455.37,763.86" fill="#9aa5f1"/>
<polygon points="408.79,127.82 414.33,128.71 461.98,765.13 457.53,764.29" fill="#9ba5f2"/>
<polygon points="411.53,128.27 417.18,129.13 464.29,765.53 459.73,764.72" fill="#9ba6f2"/>
<polygon points="414.33,128.71 420.10,129.53 466.63,765.92 461.98,765.13" fill="#9ca6f3"/>
<polygon points="417.18,129.13 423.07,129.92 469.03,766.29 464.29,765.53" fill="#9ca7f3"/>
<polygon points="420.10,129.53 426.09,130.29 471.46,766.65 466.63,765.92" fill="#9da8f4"/>
<polygon points="423.07,129.92 429.17,130.65 473.94,767.00 469.03,766.29" fill="#9da8f4"/>
<polygon points="426.09,130.29 432.30,130.98 476.47,767.33 471.46,766.65" fill="#9ea9f5"/>
<polygon points="429.17,130.65 435.48,131.30 479.03,767.64 473.94,767.00" fill="#9fa9f6"/>
<polygon points="432.30,130.98 438.71,131.61 481.63,767.95 476.47,767.33" fill="#9faaf6"/>
<polygon points="435.48,131.30 441.98,131.89 484.27,768.23 479.03,767.64" fill="#a0abf7"/>
<polygon points="438.71,131.61 445.30,132.16 486.94,768.51 481.63,767.95" fill="#a0abf7"/>
<polygon points="441.98,131.89 448.66,132.41 489.65,768.77 484.27,768.23" fill="#a0abf7"/>
<polygon points="445.30,132.16 452.06,132.64 492.39,769.01 486.94,768.51" fill="#9faaf6"/>
<polygon points="448.66,132.41 455.51,132.86 495.17,769.24 489.65,768.77" fill="#9faaf6"/>
<polygon points="452.06,132.64 458.99,133.05 497.97,769.45 492.39,769.01" fill="#9faaf6"/>
<polygon points="455.51,132.86 462.50,133.23 500.81,769.65 495.17,769.24" fill="#9faaf5"/>
<polygon points="458.99,133.05 466.05,133.39 503.67,769.83 497.97,769.45" fill="#9ea9f5"/>
<polygon points="462.50,133.23 469.63,133.53 506.56,769.99 500.81,769.65" fill="#9ea9f5"/>
<polygon points="466.05,133.39 473.25,133.66 509.47,770.14 503.67,769.83" fill="#9ea9f4"/>
<polygon points="469.63,133.53 476.89,133.76 512.41,770.28 506.56,769.99" fill="#9ea9f4"/>
<polygon points="473.25,133.66 480.55,133.85 515.36,770.40 509.47,770.14" fill="#9da8f4"/>
<polygon points="476.89,133.76 484.25,133.91 518.34,770.50 512.41,770.28" fill="#9da8f4"/>
<polygon points="480.55,133.85 487.96,133.96 521.34,770.59 515.36,770.40" fill="#9da8f3"/>
<polygon points="484.25,133.91 491.70,133.99 524.35,770.66 518.34,770.50" fill="#9da8f3"/>
<polygon points="487.96,133.96 495.45,134.00 527.38,770.71 521.34,770.59" fill="#9ca7f3"/>
<polygon points="491.70,133.99 499.22,134.00 530.42,770.75 524.35,770.66" fill="#9ca7f2"/>
<polygon points="495.45,134.00 503.01,133.97 533.47,770.77 527.38,770.71" fill="#9ca7f2"/>
<polygon points="499.22,134.00 506.81,133.93 536.54,770.78 530.42,770.75" fill="#9ba6f1"/>
<polygon points="503.01,133.97 510.62,133.86 539.61,770.77 533.47,770.77" fill="#9aa5f0"/>
<polygon points="506.81,133.93 514.44,133.78 542.69,770.75 536.54,770.78" fill="#99a4f0"/>
<polygon points="510.62,133.86 518.27,133.68 545.78,770.71 539.61,770.77" fill="#99a4ef"/>
<polygon points="514.44,133.78 522.10,133.56 548.87,770.65 542.69,770.75" fill="#98a3ee"/>
<polygon points="518.27,133.68 525.93,133.42 551.97,770.57 545.78,770.71" fill="#97a2ee"/>
<polygon points="522.10,133.56 529.77,133.27 555.06,770.48 548.87,770.65" fill="#96a1ed"/>
<polygon points="525.93,133.42 533.61,133.09 558.16,770.38 551.97,770.57" fill="#95a0ec"/>
<polygon points="529.77,133.27 537.44,132.90 561.25,770.26 555.06,770.48" fill="#949feb"/>
<polygon points="533.61,133.09 541.27,132.69 564.34,770.12 558.16,770.38" fill="#939ee9"/>
<polygon points="537.44,132.90 545.09,132.46 567.43,769.97 561.25,770.26" fill="#929de8"/>
<polygon points="541.27,132.69 548.90,132.21 570.50,769.80 564.34,770.12" fill="#919ce6"/>
<polygon points="545.09,132.46 552.70,131.95 573.57,769.62 567.43,769.97" fill="#909be4"/>
<polygon points="548.90,132.21 556.49,131.67 576.63,769.42 570.50,769.80" fill="#8f9ae3"/>
<polygon points="552.70,131.95 560.27,131.37 579.68,769.20 573.57,769.62" fill="#8e99e1"/>
<polygon points="556.49,131.67 564.03,131.05 582.71,768.97 576.63,769.42" fill="#8d98df"/>
<polygon points="560.27,131.37 567.77,130.72 585.73,768.73 579.68,769.20" fill="#8b96de"/>
<polygon points="564.03,131.05 571.48,130.37 588.73,768.47 582.71,768.97" fill="#8a95dc"/>
<polygon points="567.77,130.72 575.18,130.00 591.72,768.19 585.73,768.73" fill="#8994da"/>
<polygon points="571.48,130.37 578.85,129.62 594.68,767.90 588.73,768.47" fill="#8792d8"/>
<polygon points="575.18,130.00 582.50,129.21 597.63,767.60 591.72,768.19" fill="#8691d6"/>
<polygon points="578.85,129.62 586.12,128.80 600.55,767.28 594.68,767.90" fill="#858fd4"/>
<polygon points="582.50,129.21 589.71,128.36 603.44,766.94 597.63,767.60" fill="#848ed2"/>
<polygon points="586.12,128.80 593.26,127.92 606.32,766.60 600.55,767.28" fill="#828dd0"/>
<polygon points="589.71,128.36 596.79,127.45 609.16,766.23 603.44,766.94" fill="#818bce"/>
<polygon points="593.26,127.92 600.27,126.97 611.98,765.86 606.32,766.60" fill="#808acc"/>
<polygon points="596.79,127.45 603.72,126.48 614.76,765.47 609.16,766.23" fill="#7e88ca"/>
<polygon points="600.27,126.97 607.13,125.97 617.52,765.07 611.98,765.86" fill="#7d87c8"/>
<polygon points="603.72,126.48 610.50,125.44 620.24,764.65 614.76,765.47" fill="#7c85c6"/>
<polygon points="607.13,125.97 613.83,124.91 622.93,764.23 617.52,765.07" fill="#7a84c3"/>
<polygon points="610.50,125.44 617.11,124.35 625.58,763.79 620.24,764.65" fill="#7982c1"/>
<polygon points="613.83,124.91 620.35,123.79 628.19,763.33 622.93,764.23" fill="#7881bf"/>
<polygon points="617.11,124.35 623.54,123.21 630.77,762.87 625.58,763.79" fill="#7680bd"/>
<polygon points="620.35,123.79 626.68,122.62 633.31,762.39 628.19,763.33" fill="#757ebb"/>
<polygon points="623.54,123.21 629.77,122.01 635.80,761.90 630.77,762.87" fill="#747db9"/>
<polygon points="626.68,122.62 632.80,121.39 638.26,761.40 633.31,762.39" fill="#727bb7"/>
<polygon points="629.77,122.01 635.79,120.76 640.67,760.89 635.80,761.90" fill="#717ab5"/>
<polygon points="632.80,121.39 638.71,120.12 643.03,760.37 638.26,761.40" fill="#7079b3"/>
<polygon points="635.79,120.76 641.58,119.47 645.35,759.83 640.67,760.89" fill="#6e77b0"/>
<polygon points="638.71,120.12 644.39,118.80 647.62,759.29 643.03,760.37" fill="#6d75ad"/>
<polygon points="641.58,119.47 647.14,118.13 649.85,758.74 645.35,759.83" fill="#6b74ab"/>
<polygon points="644.39,118.80 649.83,117.44 652.02,758.17 647.62,759.29" fill="#6972a8"/>
<polygon points="647.14,118.13 652.46,116.75 654.14,757.60 649.85,758.74" fill="#6870a5"/>
<polygon points="649.83,117.44 655.02,116.04 656.21,757.02 652.02,758.17" fill="#666fa3"/>
<polygon points="652.46,116.75 657.52,115.33 658.23,756.43 654.14,757.60" fill="#656da0"/>
<polygon points="655.02,116.04 659.94,114.60 660.20,755.83 656.21,757.02" fill="#646c9e"/>
<polygon points="657.52,115.33 662.30,113.87 662.11,755.22 658.23,756.43" fill="#626a9c"/>
<polygon points="659.94,114.60 664.60,113.13 663.96,754.60 660.20,755.83" fill="#616899"/>
<polygon points="662.30,113.87 666.82,112.38 665.76,753.98 662.11,755.22" fill="#5f6797"/>
<polygon points="664.60,113.13 668.96,111.62 667.49,753.34 663.96,754.60" fill="#5e6595"/>
<polygon points="666.82,112.38 671.04,110.86 669.17,752.71 665.76,753.98" fill="#5c6493"/>
<polygon points="668.96,111.62 673.04,110.09 670.79,752.06 667.49,753.34" fill="#5b6291"/>
<polygon points="671.04,110.86 674.97,109.31 672.35,751.41 669.17,752.71" fill="#59618f"/>
<polygon points="673.04,110.09 676.82,108.53 673.85,750.75 670.79,752.06" fill="#585f8d"/>
<polygon points="674.97,109.31 678.59,107.74 675.29,750.09 672.35,751.41" fill="#575e8b"/>
<polygon points="676.82,108.53 680.29,106.95 676.66,749.42 673.85,750.75" fill="#565d8a"/>
<polygon points="678.59,107.74 681.91,106.15 677.97,748.75 675.29,750.09" fill="#565d8a"/>
<polygon points="680.29,106.95 683.44,105.35 679.22,748.07 676.66,749.42" fill="#565d8b"/>
<polygon points="681.91,106.15 684.90,104.55 680.40,747.38 677.97,748.75" fill="#575e8b"/>
<polygon points="683.44,105.35 686.28,103.74 681.52,746.70 679.22,748.07" fill="#575e8b"/>
<polygon points="684.90,104.55 687.57,102.93 682.57,746.01 680.40,747.38" fill="#575e8b"/>
<polygon points="686.28,103.74 688.78,102.11 683.55,745.31 681.52,746.70" fill="#575e8b"/>
<polygon points="687.57,102.93 689.91,101.29 684.47,744.62 682.57,746.01" fill="#575e8c"/>
<polygon points="688.78,102.11 690.96,100.48 685.31,743.92 683.55,745.31" fill="#575e8c"/>
<polygon points="689.91,101.29 691.92,99.66 686.10,743.22 684.47,744.62" fill="#575e8c"/>
<polygon points="690.96,100.48 692.79,98.83 686.81,742.51 685.31,743.92" fill="#575e8c"/>
<polygon points="691.92,99.66 693.58,98.01 687.45,741.81 686.10,743.22" fill="#585f8c"/>
<polygon points="692.79,98.83 694.29,97.19 688.03,741.10 686.81,742.51" fill="#585f8c"/>
<polygon points="693.58,98.01 694.91,96.37 688.53,740.40 687.45,741.81" fill="#585f8d"/>
<polygon points="694.29,97.19 695.44,95.55 688.97,739.69 688.03,741.10" fill="#585f8d"/>
<polygon points="694.91,96.37 695.89,94.73 689.33,738.98 688.53,740.40" fill="#585f8d"/>
<polygon points="695.44,95.55 696.25,93.91 689.63,738.28 688.97,739.69" fill="#585f8d"/>
<polygon points="695.89,94.73 696.52,93.10 689.85,737.57 689.33,738.98" fill="#585f8d"/>
<polygon points="696.25,93.91 696.70,92.29 690.01,736.87 689.63,738.28" fill="#585f8d"/>
<polygon points="696.52,93.10 696.80,91.48 690.09,736.17 689.85,737.57" fill="#585f8d"/>
<polygon points="696.70,92.29 696.81,90.67 690.11,735.46 690.01,736.87" fill="#585f8d"/>
<polygon points="696.80,91.48 696.73,89.87 690.05,734.77 690.09,736.17" fill="#585f8d"/>
<polygon points="696.81,90.67 696.57,89.07 689.93,734.07 690.11,735.46" fill="#585f8d"/>
<polygon points="696.73,89.87 696.32,88.28 689.73,733.38 690.05,734.77" fill="#585f8d"/>
<polygon points="696.57,89.07 695.98,87.49 689.46,732.69 689.93,734.07" fill="#585f8d"/>
<polygon points="696.32,88.28 695.55,86.70 689.12,732.00 689.73,733.38" fill="#585f8d"/>
<polygon points="695.98,87.49 695.04,85.92 688.72,731.32 689.46,732.69" fill="#585f8d"/>
<polygon points="695.55,86.70 694.44,85.15 688.24,730.64 689.12,732.00" fill="#585f8d"/>
<polygon points="695.04,85.92 693.76,84.39 687.69,729.97 688.72,731.32" fill="#585f8d"/>
<polygon points="694.44,85.15 692.99,83.63 687.08,729.30 688.24,730.64" fill="#585f8d"/>
<polygon points="693.76,84.39 692.13,82.88 686.39,728.64 687.69,729.97" fill="#585f8d"/>
<polygon points="692.99,83.63 691.19,82.14 685.64,727.98 687.08,729.30" fill="#585f8c"/>
<polygon points="692.13,82.88 691.19,82.14 685.64,727.98 686.39,728.64" fill="#585f8c"/>
</g>
<polygon points="696.25,144.39 696.26,144.70 696.25,145.00 696.23,145.31 696.20,145.62 696.16,145.92 696.10,146.23 696.03,146.54 695.95,146.85 695.86,147.16 695.75,147.47 695.63,147.77 695.50,148.08 695.35,148.39 695.20,148.70 695.03,149.02 694.84,149.33 694.65,149.64 694.44,149.95 694.22,150.26 693.99,150.57 693.74,150.88 693.49,151.19 693.22,151.50 692.93,151.81 692.64,152.13 692.33,152.44 692.01,152.75 691.68,153.06 691.34,153.37 690.98,153.68 690.61,153.99 690.23,154.30 689.84,154.61 689.44,154.92 689.02,155.23 688.59,155.54 688.15,155.85 687.70,156.16 687.23,156.47 686.76,156.77 686.27,157.08 685.77,157.39 685.25,157.69 684.73,158.00 684.19,158.31 683.64,158.61 683.09,158.92 682.51,159.22 681.93,159.52 681.34,159.83 680.73,160.13 680.11,160.43 679.49,160.73 678.85,161.03 678.19,161.33 677.53,161.63 676.86,161.93 676.17,162.22 675.48,162.52 674.77,162.81 674.05,163.11 673.32,163.40 672.58,163.69 671.83,163.99 671.07,164.28 670.30,164.57 669.52,164.86 668.72,165.14 667.92,165.43 667.11,165.72 666.28,166.00 665.45,166.28 664.60,166.57 663.74,166.85 662.88,167.13 662.00,167.41 661.12,167.68 660.22,167.96 659.32,168.23 658.40,168.51 657.47,168.78 656.54,169.05 655.60,169.32 654.64,169.59 653.68,169.86 652.70,170.12 651.72,170.39 650.73,170.65 649.73,170.91 648.72,171.17 647.70,171.43 646.67,171.69 645.64,171.94 644.59,172.19 643.54,172.45 642.47,172.70 641.40,172.95 640.32,173.19 639.24,173.44 638.14,173.68 637.04,173.92 635.92,174.16 634.80,174.40 633.67,174.64 632.54,174.88 631.39,175.11 630.24,175.34 629.08,175.57 627.91,175.80 626.74,176.02 625.56,176.25 624.37,176.47 623.17,176.69 621.97,176.91 620.76,177.13 619.54,177.34 618.32,177.55 617.09,177.76 615.85,177.97 614.61,178.18 613.36,178.38 612.10,178.59 610.84,178.79 609.57,178.98 608.29,179.18 607.01,179.38 605.73,179.57 604.43,179.76 603.13,179.94 601.83,180.13 600.52,180.31 599.21,180.49 597.89,180.67 596.56,180.85 595.23,181.02 593.90,181.20 592.56,181.37 591.22,181.53 589.87,181.70 588.51,181.86 587.16,182.02 585.79,182.18 584.43,182.34 583.06,182.49 581.68,182.64 580.30,182.79 578.92,182.94 577.54,183.08 576.15,183.22 574.75,183.36 573.36,183.50 571.96,183.63 570.55,183.77 569.15,183.90 567.74,184.02 566.33,184.15 564.91,184.27 563.50,184.39 562.08,184.51 560.66,184.62 559.23,184.73 557.80,184.84 556.38,184.95 554.95,185.05 553.51,185.15 552.08,185.25 550.64,185.35 549.21,185.44 547.77,185.54 546.33,185.62 544.89,185.71 543.44,185.79 542.00,185.88 540.56,185.95 539.11,186.03 537.67,186.10 536.22,186.17 534.77,186.24 533.33,186.31 531.88,186.37 530.43,186.43 528.98,186.49 527.54,186.54 526.09,186.59 524.64,186.64 523.20,186.69 521.75,186.73 520.31,186.77 518.86,186.81 517.42,186.85 515.97,186.88 514.53,186.91 513.09,186.94 511.65,186.96 510.22,186.98 508.78,187.00 507.35,187.02 505.91,187.03 504.48,187.05 503.06,187.05 501.63,187.06 500.20,187.06 498.78,187.06 497.36,187.06 495.95,187.06 494.53,187.05 493.12,187.04 491.71,187.03 490.30,187.01 488.90,186.99 487.50,186.97 486.11,186.95 484.71,186.92 483.32,186.89 481.94,186.86 480.55,186.82 479.18,186.79 477.80,186.75 476.43,186.70 475.06,186.66 473.70,186.61 472.34,186.56 470.99,186.50 469.64,186.45 468.30,186.39 466.96,186.33 465.62,186.26 464.29,186.20 462.97,186.13 461.65,186.05 460.33,185.98 459.02,185.90 457.72,185.82 456.42,185.74 455.13,185.65 453.84,185.57 452.56,185.48 451.29,185.38 450.02,185.29 448.75,185.19 447.50,185.09 446.25,184.98 445.00,184.88 443.77,184.77 442.53,184.66 441.31,184.54 440.09,184.43 438.88,184.31 437.68,184.19 436.48,184.07 435.29,183.94 434.11,183.81 432.94,183.68 431.77,183.55 430.61,183.41 429.46,183.27 428.31,183.13 427.17,182.99 426.05,182.84 424.92,182.69 423.81,182.54 422.71,182.39 421.61,182.23 420.52,182.08 419.44,181.92 418.37,181.75 417.31,181.59 416.25,181.42 415.21,181.25 414.17,181.08 413.14,180.91 412.12,180.73 411.11,180.56 410.11,180.37 409.12,180.19 408.14,180.01 407.16,179.82 406.20,179.63 405.24,179.44 404.30,179.25 403.36,179.05 402.44,178.85 401.52,178.65 400.62,178.45 399.72,178.25 398.83,178.04 397.96,177.83 397.09,177.62 396.24,177.41 395.39,177.20 394.55,176.98 393.73,176.77 392.91,176.55 392.11,176.32 391.32,176.10 390.53,175.87 389.76,175.65 389.00,175.42 388.25,175.19 387.51,174.95 386.78,174.72 386.06,174.48 385.35,174.25 384.66,174.01 383.97,173.76 383.30,173.52 382.63,173.28 381.98,173.03 381.34,172.78 380.71,172.53 380.09,172.28 379.49,172.03 378.89,171.77 378.31,171.52 377.74,171.26 377.18,171.00 376.63,170.74 376.09,170.48 375.57,170.21 375.06,169.95 374.55,169.68 374.07,169.41 373.59,169.14 373.12,168.87 372.67,168.60 372.23,168.33 371.80,168.05 371.38,167.78 370.97,167.50 370.58,167.22 370.20,166.94 369.83,166.66 369.48,166.38 369.13,166.10 368.80,165.81 368.48,165.53 368.17,165.24 367.88,164.95 367.59,164.66 367.32,164.38 367.07,164.08 366.82,163.79 366.59,163.50 366.37,163.21 366.16,162.91 365.96,162.62 365.78,162.32 365.61,162.03 365.45,161.73 365.31,161.43 365.18,161.13 365.06,160.83 364.95,160.53 364.85,160.23 364.77,159.93 364.70,159.63 364.64,159.32 364.60,159.02 364.57,158.71 364.55,158.41 364.54,158.10 364.55,157.80 364.57,157.49 364.60,157.18 364.64,156.88 364.70,156.57 364.77,156.26 364.85,155.95 364.94,155.64 365.05,155.33 365.17,155.03 365.30,154.72 365.45,154.41 365.60,154.10 365.77,153.78 365.96,153.47 366.15,153.16 366.36,152.85 366.58,152.54 366.81,152.23 367.06,151.92 367.31,151.61 367.58,151.30 367.87,150.99 368.16,150.67 368.47,150.36 368.79,150.05 369.12,149.74 369.46,149.43 369.82,149.12 370.19,148.81 370.57,148.50 370.96,148.19 371.36,147.88 371.78,147.57 372.21,147.26 372.65,146.95 373.10,146.64 373.57,146.33 374.04,146.03 374.53,145.72 375.03,145.41 375.55,145.11 376.07,144.80 376.61,144.49 377.16,144.19 377.71,143.88 378.29,143.58 378.87,143.28 379.46,142.97 380.07,142.67 380.69,142.37 381.31,142.07 381.95,141.77 382.61,141.47 383.27,141.17 383.94,140.87 384.63,140.58 385.32,140.28 386.03,139.99 386.75,139.69 387.48,139.40 388.22,139.11 388.97,138.81 389.73,138.52 390.50,138.23 391.28,137.94 392.08,137.66 392.88,137.37 393.69,137.08 394.52,136.80 395.35,136.52 396.20,136.23 397.06,135.95 397.92,135.67 398.80,135.39 399.68,135.12 400.58,134.84 401.48,134.57 402.40,134.29 403.33,134.02 404.26,133.75 405.20,133.48 406.16,133.21 407.12,132.94 408.10,132.68 409.08,132.41 410.07,132.15 411.07,131.89 412.08,131.63 413.10,131.37 414.13,131.11 415.16,130.86 416.21,130.61 417.26,130.35 418.33,130.10 419.40,129.85 420.48,129.61 421.56,129.36 422.66,129.12 423.76,128.88 424.88,128.64 426.00,128.40 427.13,128.16 428.26,127.92 429.41,127.69 430.56,127.46 431.72,127.23 432.89,127.00 434.06,126.78 435.24,126.55 436.43,126.33 437.63,126.11 438.83,125.89 440.04,125.67 441.26,125.46 442.48,125.25 443.71,125.04 444.95,124.83 446.19,124.62 447.44,124.42 448.70,124.21 449.96,124.01 451.23,123.82 452.51,123.62 453.79,123.42 455.07,123.23 456.37,123.04 457.67,122.86 458.97,122.67 460.28,122.49 461.59,122.31 462.91,122.13 464.24,121.95 465.57,121.78 466.90,121.60 468.24,121.43 469.58,121.27 470.93,121.10 472.29,120.94 473.64,120.78 475.01,120.62 476.37,120.46 477.74,120.31 479.12,120.16 480.50,120.01 481.88,119.86 483.26,119.72 484.65,119.58 486.05,119.44 487.44,119.30 488.84,119.17 490.25,119.03 491.65,118.90 493.06,118.78 494.47,118.65 495.89,118.53 497.30,118.41 498.72,118.29 500.14,118.18 501.57,118.07 503.00,117.96 504.42,117.85 505.85,117.75 507.29,117.65 508.72,117.55 510.16,117.45 511.59,117.36 513.03,117.26 514.47,117.18 515.91,117.09 517.36,117.01 518.80,116.92 520.24,116.85 521.69,116.77 523.13,116.70 524.58,116.63 526.03,116.56 527.47,116.49 528.92,116.43 530.37,116.37 531.82,116.31 533.26,116.26 534.71,116.21 536.16,116.16 537.60,116.11 539.05,116.07 540.49,116.03 541.94,115.99 543.38,115.95 544.83,115.92 546.27,115.89 547.71,115.86 549.15,115.84 550.58,115.82 552.02,115.80 553.45,115.78 554.89,115.77 556.32,115.75 557.74,115.75 559.17,115.74 560.60,115.74 562.02,115.74 563.44,115.74 564.85,115.74 566.27,115.75 567.68,115.76 569.09,115.77 570.50,115.79 571.90,115.81 573.30,115.83 574.69,115.85 576.09,115.88 577.48,115.91 578.86,115.94 580.25,115.98 581.62,116.01 583.00,116.05 584.37,116.10 585.74,116.14 587.10,116.19 588.46,116.24 589.81,116.30 591.16,116.35 592.50,116.41 593.84,116.47 595.18,116.54 596.51,116.60 597.83,116.67 599.15,116.75 600.47,116.82 601.78,116.90 603.08,116.98 604.38,117.06 605.67,117.15 606.96,117.23 608.24,117.32 609.51,117.42 610.78,117.51 612.05,117.61 613.30,117.71 614.55,117.82 615.80,117.92 617.03,118.03 618.27,118.14 619.49,118.26 620.71,118.37 621.92,118.49 623.12,118.61 624.32,118.73 625.51,118.86 626.69,118.99 627.86,119.12 629.03,119.25 630.19,119.39 631.34,119.53 632.49,119.67 633.63,119.81 634.75,119.96 635.88,120.11 636.99,120.26 638.09,120.41 639.19,120.57 640.28,120.72 641.36,120.88 642.43,121.05 643.49,121.21 644.55,121.38 645.59,121.55 646.63,121.72 647.66,121.89 648.68,122.07 649.69,122.24 650.69,122.43 651.68,122.61 652.66,122.79 653.64,122.98 654.60,123.17 655.56,123.36 656.50,123.55 657.44,123.75 658.36,123.95 659.28,124.15 660.18,124.35 661.08,124.55 661.97,124.76 662.84,124.97 663.71,125.18 664.56,125.39 665.41,125.60 666.25,125.82 667.07,126.03 667.89,126.25 668.69,126.48 669.48,126.70 670.27,126.93 671.04,127.15 671.80,127.38 672.55,127.61 673.29,127.85 674.02,128.08 674.74,128.32 675.45,128.55 676.14,128.79 676.83,129.04 677.50,129.28 678.17,129.52 678.82,129.77 679.46,130.02 680.09,130.27 680.71,130.52 681.31,130.77 681.91,131.03 682.49,131.28 683.06,131.54 683.62,131.80 684.17,132.06 684.71,132.32 685.23,132.59 685.74,132.85 686.25,133.12 686.73,133.39 687.21,133.66 687.68,133.93 688.13,134.20 688.57,134.47 689.00,134.75 689.42,135.02 689.83,135.30 690.22,135.58 690.60,135.86 690.97,136.14 691.32,136.42 691.67,136.70 692.00,136.99 692.32,137.27 692.63,137.56 692.92,137.85 693.21,138.14 693.48,138.42 693.73,138.72 693.98,139.01 694.21,139.30 694.43,139.59 694.64,139.89 694.84,140.18 695.02,140.48 695.19,140.77 695.35,141.07 695.49,141.37 695.62,141.67 695.74,141.97 695.85,142.27 695.95,142.57 696.03,142.87 696.10,143.17 696.16,143.48 696.20,143.78 696.23,144.09" fill="url(#gin)"/>
<g clip-path="url(#topclip)">
<polygon points="607.56,148.13 607.56,200.00 452.44,200.00 452.44,153.27 452.44,153.27 452.47,152.70 452.60,152.12 452.82,151.55 453.14,150.97 453.55,150.39 454.06,149.81 454.67,149.23 455.36,148.66 456.16,148.09 457.04,147.52 458.01,146.95 459.08,146.39 460.23,145.83 461.47,145.29 462.79,144.74 464.20,144.21 465.69,143.68 467.26,143.16 468.91,142.65 470.63,142.15 472.43,141.67 474.30,141.19 476.24,140.72 478.25,140.27 480.32,139.83 482.45,139.40 484.64,138.99 486.89,138.59 489.19,138.21 491.55,137.84 493.95,137.49 496.39,137.16 498.88,136.84 501.41,136.54 503.97,136.26 506.56,135.99 509.19,135.75 511.84,135.52 514.51,135.31 517.20,135.12 519.91,134.95 522.63,134.80 525.36,134.67 528.09,134.56 530.83,134.47 533.57,134.40 536.30,134.35 539.02,134.32 541.74,134.31 544.44,134.32 547.12,134.35 549.78,134.40 552.41,134.47 555.02,134.56 557.59,134.68 560.13,134.81 562.64,134.96 565.10,135.13 567.52,135.32 569.89,135.53 572.21,135.76 574.48,136.01 576.70,136.28 578.85,136.56 580.95,136.86 582.98,137.18 584.95,137.52 586.84,137.87 588.67,138.24 590.42,138.62 592.10,139.02 593.70,139.43 595.23,139.86 596.67,140.30 598.02,140.76 599.30,141.22 600.48,141.70 601.58,142.19 602.59,142.69 603.51,143.20 604.34,143.72 605.07,144.25 605.71,144.78 606.26,145.32 606.71,145.87 607.07,146.43 607.33,146.99 607.49,147.56 607.56,148.13" fill="url(#gis)"/>
</g>
<polygon points="607.56,148.13 607.55,148.41 607.53,148.69 607.48,148.98 607.41,149.26 607.31,149.55 607.19,149.83 607.04,150.12 606.88,150.41 606.69,150.69 606.47,150.98 606.23,151.26 605.97,151.55 605.69,151.84 605.38,152.12 605.05,152.41 604.70,152.69 604.33,152.97 603.93,153.26 603.51,153.54 603.06,153.82 602.60,154.10 602.11,154.38 601.60,154.66 601.07,154.94 600.52,155.21 599.94,155.49 599.35,155.76 598.73,156.03 598.09,156.30 597.44,156.57 596.76,156.83 596.06,157.10 595.34,157.36 594.60,157.62 593.84,157.88 593.06,158.14 592.26,158.39 591.45,158.64 590.61,158.89 589.76,159.14 588.89,159.38 588.00,159.62 587.09,159.86 586.16,160.10 585.22,160.33 584.26,160.56 583.29,160.79 582.30,161.01 581.29,161.23 580.26,161.45 579.23,161.66 578.17,161.87 577.10,162.08 576.02,162.29 574.93,162.49 573.81,162.68 572.69,162.88 571.55,163.07 570.41,163.25 569.24,163.44 568.07,163.61 566.89,163.79 565.69,163.96 564.48,164.12 563.26,164.29 562.04,164.44 560.80,164.60 559.55,164.75 558.30,164.89 557.03,165.03 555.76,165.17 554.48,165.30 553.19,165.43 551.89,165.55 550.59,165.67 549.28,165.79 547.97,165.90 546.65,166.00 545.33,166.10 544.00,166.20 542.66,166.29 541.33,166.38 539.98,166.46 538.64,166.53 537.29,166.61 535.95,166.67 534.60,166.73 533.24,166.79 531.89,166.84 530.54,166.89 529.18,166.93 527.83,166.97 526.48,167.00 525.13,167.03 523.78,167.05 522.43,167.07 521.08,167.08 519.74,167.09 518.40,167.09 517.06,167.09 515.73,167.08 514.40,167.07 513.08,167.05 511.76,167.03 510.45,167.01 509.14,166.97 507.84,166.94 506.54,166.89 505.26,166.85 503.98,166.79 502.71,166.74 501.44,166.68 500.19,166.61 498.95,166.54 497.71,166.46 496.48,166.38 495.27,166.29 494.06,166.20 492.87,166.11 491.69,166.01 490.52,165.90 489.36,165.79 488.21,165.68 487.08,165.56 485.95,165.44 484.85,165.31 483.75,165.18 482.67,165.04 481.61,164.90 480.56,164.76 479.52,164.61 478.50,164.45 477.50,164.30 476.51,164.13 475.54,163.97 474.58,163.80 473.64,163.62 472.72,163.45 471.82,163.26 470.93,163.08 470.06,162.89 469.21,162.70 468.38,162.50 467.57,162.30 466.78,162.09 466.00,161.89 465.25,161.68 464.51,161.46 463.80,161.24 463.10,161.02 462.43,160.80 461.77,160.57 461.14,160.34 460.53,160.11 459.94,159.87 459.37,159.64 458.82,159.39 458.29,159.15 457.79,158.90 457.30,158.66 456.84,158.40 456.40,158.15 455.99,157.89 455.60,157.64 455.22,157.38 454.88,157.11 454.55,156.85 454.25,156.58 453.97,156.31 453.71,156.05 453.48,155.77 453.27,155.50 453.09,155.23 452.92,154.95 452.78,154.67 452.67,154.40 452.58,154.12 452.51,153.84 452.46,153.56 452.44,153.27 452.45,152.99 452.47,152.71 452.52,152.42 452.59,152.14 452.69,151.85 452.81,151.57 452.96,151.28 453.12,150.99 453.31,150.71 453.53,150.42 453.77,150.14 454.03,149.85 454.31,149.56 454.62,149.28 454.95,148.99 455.30,148.71 455.67,148.43 456.07,148.14 456.49,147.86 456.94,147.58 457.40,147.30 457.89,147.02 458.40,146.74 458.93,146.46 459.48,146.19 460.06,145.91 460.65,145.64 461.27,145.37 461.91,145.10 462.56,144.83 463.24,144.57 463.94,144.30 464.66,144.04 465.40,143.78 466.16,143.52 466.94,143.26 467.74,143.01 468.55,142.76 469.39,142.51 470.24,142.26 471.11,142.02 472.00,141.78 472.91,141.54 473.84,141.30 474.78,141.07 475.74,140.84 476.71,140.61 477.70,140.39 478.71,140.17 479.74,139.95 480.77,139.74 481.83,139.53 482.90,139.32 483.98,139.11 485.07,138.91 486.19,138.72 487.31,138.52 488.45,138.33 489.59,138.15 490.76,137.96 491.93,137.79 493.11,137.61 494.31,137.44 495.52,137.28 496.74,137.11 497.96,136.96 499.20,136.80 500.45,136.65 501.70,136.51 502.97,136.37 504.24,136.23 505.52,136.10 506.81,135.97 508.11,135.85 509.41,135.73 510.72,135.61 512.03,135.50 513.35,135.40 514.67,135.30 516.00,135.20 517.34,135.11 518.67,135.02 520.02,134.94 521.36,134.87 522.71,134.79 524.05,134.73 525.40,134.67 526.76,134.61 528.11,134.56 529.46,134.51 530.82,134.47 532.17,134.43 533.52,134.40 534.87,134.37 536.22,134.35 537.57,134.33 538.92,134.32 540.26,134.31 541.60,134.31 542.94,134.31 544.27,134.32 545.60,134.33 546.92,134.35 548.24,134.37 549.55,134.39 550.86,134.43 552.16,134.46 553.46,134.51 554.74,134.55 556.02,134.61 557.29,134.66 558.56,134.72 559.81,134.79 561.05,134.86 562.29,134.94 563.52,135.02 564.73,135.11 565.94,135.20 567.13,135.29 568.31,135.39 569.48,135.50 570.64,135.61 571.79,135.72 572.92,135.84 574.05,135.96 575.15,136.09 576.25,136.22 577.33,136.36 578.39,136.50 579.44,136.64 580.48,136.79 581.50,136.95 582.50,137.10 583.49,137.27 584.46,137.43 585.42,137.60 586.36,137.78 587.28,137.95 588.18,138.14 589.07,138.32 589.94,138.51 590.79,138.70 591.62,138.90 592.43,139.10 593.22,139.31 594.00,139.51 594.75,139.72 595.49,139.94 596.20,140.16 596.90,140.38 597.57,140.60 598.23,140.83 598.86,141.06 599.47,141.29 600.06,141.53 600.63,141.76 601.18,142.01 601.71,142.25 602.21,142.50 602.70,142.74 603.16,143.00 603.60,143.25 604.01,143.51 604.40,143.76 604.78,144.02 605.12,144.29 605.45,144.55 605.75,144.82 606.03,145.09 606.29,145.35 606.52,145.63 606.73,145.90 606.91,146.17 607.08,146.45 607.22,146.73 607.33,147.00 607.42,147.28 607.49,147.56 607.54,147.84" fill="#8a95db" stroke="#262a36" stroke-width="1.1"/>
<polygon points="696.25,144.39 696.26,144.70 696.25,145.00 696.23,145.31 696.20,145.62 696.16,145.92 696.10,146.23 696.03,146.54 695.95,146.85 695.86,147.16 695.75,147.47 695.63,147.77 695.50,148.08 695.35,148.39 695.20,148.70 695.03,149.02 694.84,149.33 694.65,149.64 694.44,149.95 694.22,150.26 693.99,150.57 693.74,150.88 693.49,151.19 693.22,151.50 692.93,151.81 692.64,152.13 692.33,152.44 692.01,152.75 691.68,153.06 691.34,153.37 690.98,153.68 690.61,153.99 690.23,154.30 689.84,154.61 689.44,154.92 689.02,155.23 688.59,155.54 688.15,155.85 687.70,156.16 687.23,156.47 686.76,156.77 686.27,157.08 685.77,157.39 685.25,157.69 684.73,158.00 684.19,158.31 683.64,158.61 683.09,158.92 682.51,159.22 681.93,159.52 681.34,159.83 680.73,160.13 680.11,160.43 679.49,160.73 678.85,161.03 678.19,161.33 677.53,161.63 676.86,161.93 676.17,162.22 675.48,162.52 674.77,162.81 674.05,163.11 673.32,163.40 672.58,163.69 671.83,163.99 671.07,164.28 670.30,164.57 669.52,164.86 668.72,165.14 667.92,165.43 667.11,165.72 666.28,166.00 665.45,166.28 664.60,166.57 663.74,166.85 662.88,167.13 662.00,167.41 661.12,167.68 660.22,167.96 659.32,168.23 658.40,168.51 657.47,168.78 656.54,169.05 655.60,169.32 654.64,169.59 653.68,169.86 652.70,170.12 651.72,170.39 650.73,170.65 649.73,170.91 648.72,171.17 647.70,171.43 646.67,171.69 645.64,171.94 644.59,172.19 643.54,172.45 642.47,172.70 641.40,172.95 640.32,173.19 639.24,173.44 638.14,173.68 637.04,173.92 635.92,174.16 634.80,174.40 633.67,174.64 632.54,174.88 631.39,175.11 630.24,175.34 629.08,175.57 627.91,175.80 626.74,176.02 625.56,176.25 624.37,176.47 623.17,176.69 621.97,176.91 620.76,177.13 619.54,177.34 618.32,177.55 617.09,177.76 615.85,177.97 614.61,178.18 613.36,178.38 612.10,178.59 610.84,178.79 609.57,178.98 608.29,179.18 607.01,179.38 605.73,179.57 604.43,179.76 603.13,179.94 601.83,180.13 600.52,180.31 599.21,180.49 597.89,180.67 596.56,180.85 595.23,181.02 593.90,181.20 592.56,181.37 591.22,181.53 589.87,181.70 588.51,181.86 587.16,182.02 585.79,182.18 584.43,182.34 583.06,182.49 581.68,182.64 580.30,182.79 578.92,182.94 577.54,183.08 576.15,183.22 574.75,183.36 573.36,183.50 571.96,183.63 570.55,183.77 569.15,183.90 567.74,184.02 566.33,184.15 564.91,184.27 563.50,184.39 562.08,184.51 560.66,184.62 559.23,184.73 557.80,184.84 556.38,184.95 554.95,185.05 553.51,185.15 552.08,185.25 550.64,185.35 549.21,185.44 547.77,185.54 546.33,185.62 544.89,185.71 543.44,185.79 542.00,185.88 540.56,185.95 539.11,186.03 537.67,186.10 536.22,186.17 534.77,186.24 533.33,186.31 531.88,186.37 530.43,186.43 528.98,186.49 527.54,186.54 526.09,186.59 524.64,186.64 523.20,186.69 521.75,186.73 520.31,186.77 518.86,186.81 517.42,186.85 515.97,186.88 514.53,186.91 513.09,186.94 511.65,186.96 510.22,186.98 508.78,187.00 507.35,187.02 505.91,187.03 504.48,187.05 503.06,187.05 501.63,187.06 500.20,187.06 498.78,187.06 497.36,187.06 495.95,187.06 494.53,187.05 493.12,187.04 491.71,187.03 490.30,187.01 488.90,186.99 487.50,186.97 486.11,186.95 484.71,186.92 483.32,186.89 481.94,186.86 480.55,186.82 479.18,186.79 477.80,186.75 476.43,186.70 475.06,186.66 473.70,186.61 472.34,186.56 470.99,186.50 469.64,186.45 468.30,186.39 466.96,186.33 465.62,186.26 464.29,186.20 462.97,186.13 461.65,186.05 460.33,185.98 459.02,185.90 457.72,185.82 456.42,185.74 455.13,185.65 453.84,185.57 452.56,185.48 451.29,185.38 450.02,185.29 448.75,185.19 447.50,185.09 446.25,184.98 445.00,184.88 443.77,184.77 442.53,184.66 441.31,184.54 440.09,184.43 438.88,184.31 437.68,184.19 436.48,184.07 435.29,183.94 434.11,183.81 432.94,183.68 431.77,183.55 430.61,183.41 429.46,183.27 428.31,183.13 427.17,182.99 426.05,182.84 424.92,182.69 423.81,182.54 422.71,182.39 421.61,182.23 420.52,182.08 419.44,181.92 418.37,181.75 417.31,181.59 416.25,181.42 415.21,181.25 414.17,181.08 413.14,180.91 412.12,180.73 411.11,180.56 410.11,180.37 409.12,180.19 408.14,180.01 407.16,179.82 406.20,179.63 405.24,179.44 404.30,179.25 403.36,179.05 402.44,178.85 401.52,178.65 400.62,178.45 399.72,178.25 398.83,178.04 397.96,177.83 397.09,177.62 396.24,177.41 395.39,177.20 394.55,176.98 393.73,176.77 392.91,176.55 392.11,176.32 391.32,176.10 390.53,175.87 389.76,175.65 389.00,175.42 388.25,175.19 387.51,174.95 386.78,174.72 386.06,174.48 385.35,174.25 384.66,174.01 383.97,173.76 383.30,173.52 382.63,173.28 381.98,173.03 381.34,172.78 380.71,172.53 380.09,172.28 379.49,172.03 378.89,171.77 378.31,171.52 377.74,171.26 377.18,171.00 376.63,170.74 376.09,170.48 375.57,170.21 375.06,169.95 374.55,169.68 374.07,169.41 373.59,169.14 373.12,168.87 372.67,168.60 372.23,168.33 371.80,168.05 371.38,167.78 370.97,167.50 370.58,167.22 370.20,166.94 369.83,166.66 369.48,166.38 369.13,166.10 368.80,165.81 368.48,165.53 368.17,165.24 367.88,164.95 367.59,164.66 367.32,164.38 367.07,164.08 366.82,163.79 366.59,163.50 366.37,163.21 366.16,162.91 365.96,162.62 365.78,162.32 365.61,162.03 365.45,161.73 365.31,161.43 365.18,161.13 365.06,160.83 364.95,160.53 364.85,160.23 364.77,159.93 364.70,159.63 364.64,159.32 364.60,159.02 364.57,158.71 364.55,158.41 364.54,158.10 364.55,157.80 364.57,157.49 364.60,157.18 364.64,156.88 364.70,156.57 364.77,156.26 364.85,155.95 364.94,155.64 365.05,155.33 365.17,155.03 365.30,154.72 365.45,154.41 365.60,154.10 365.77,153.78 365.96,153.47 366.15,153.16 366.36,152.85 366.58,152.54 366.81,152.23 367.06,151.92 367.31,151.61 367.58,151.30 367.87,150.99 368.16,150.67 368.47,150.36 368.79,150.05 369.12,149.74 369.46,149.43 369.82,149.12 370.19,148.81 370.57,148.50 370.96,148.19 371.36,147.88 371.78,147.57 372.21,147.26 372.65,146.95 373.10,146.64 373.57,146.33 374.04,146.03 374.53,145.72 375.03,145.41 375.55,145.11 376.07,144.80 376.61,144.49 377.16,144.19 377.71,143.88 378.29,143.58 378.87,143.28 379.46,142.97 380.07,142.67 380.69,142.37 381.31,142.07 381.95,141.77 382.61,141.47 383.27,141.17 383.94,140.87 384.63,140.58 385.32,140.28 386.03,139.99 386.75,139.69 387.48,139.40 388.22,139.11 388.97,138.81 389.73,138.52 390.50,138.23 391.28,137.94 392.08,137.66 392.88,137.37 393.69,137.08 394.52,136.80 395.35,136.52 396.20,136.23 397.06,135.95 397.92,135.67 398.80,135.39 399.68,135.12 400.58,134.84 401.48,134.57 402.40,134.29 403.33,134.02 404.26,133.75 405.20,133.48 406.16,133.21 407.12,132.94 408.10,132.68 409.08,132.41 410.07,132.15 411.07,131.89 412.08,131.63 413.10,131.37 414.13,131.11 415.16,130.86 416.21,130.61 417.26,130.35 418.33,130.10 419.40,129.85 420.48,129.61 421.56,129.36 422.66,129.12 423.76,128.88 424.88,128.64 426.00,128.40 427.13,128.16 428.26,127.92 429.41,127.69 430.56,127.46 431.72,127.23 432.89,127.00 434.06,126.78 435.24,126.55 436.43,126.33 437.63,126.11 438.83,125.89 440.04,125.67 441.26,125.46 442.48,125.25 443.71,125.04 444.95,124.83 446.19,124.62 447.44,124.42 448.70,124.21 449.96,124.01 451.23,123.82 452.51,123.62 453.79,123.42 455.07,123.23 456.37,123.04 457.67,122.86 458.97,122.67 460.28,122.49 461.59,122.31 462.91,122.13 464.24,121.95 465.57,121.78 466.90,121.60 468.24,121.43 469.58,121.27 470.93,121.10 472.29,120.94 473.64,120.78 475.01,120.62 476.37,120.46 477.74,120.31 479.12,120.16 480.50,120.01 481.88,119.86 483.26,119.72 484.65,119.58 486.05,119.44 487.44,119.30 488.84,119.17 490.25,119.03 491.65,118.90 493.06,118.78 494.47,118.65 495.89,118.53 497.30,118.41 498.72,118.29 500.14,118.18 501.57,118.07 503.00,117.96 504.42,117.85 505.85,117.75 507.29,117.65 508.72,117.55 510.16,117.45 511.59,117.36 513.03,117.26 514.47,117.18 515.91,117.09 517.36,117.01 518.80,116.92 520.24,116.85 521.69,116.77 523.13,116.70 524.58,116.63 526.03,116.56 527.47,116.49 528.92,116.43 530.37,116.37 531.82,116.31 533.26,116.26 534.71,116.21 536.16,116.16 537.60,116.11 539.05,116.07 540.49,116.03 541.94,115.99 543.38,115.95 544.83,115.92 546.27,115.89 547.71,115.86 549.15,115.84 550.58,115.82 552.02,115.80 553.45,115.78 554.89,115.77 556.32,115.75 557.74,115.75 559.17,115.74 560.60,115.74 562.02,115.74 563.44,115.74 564.85,115.74 566.27,115.75 567.68,115.76 569.09,115.77 570.50,115.79 571.90,115.81 573.30,115.83 574.69,115.85 576.09,115.88 577.48,115.91 578.86,115.94 580.25,115.98 581.62,116.01 583.00,116.05 584.37,116.10 585.74,116.14 587.10,116.19 588.46,116.24 589.81,116.30 591.16,116.35 592.50,116.41 593.84,116.47 595.18,116.54 596.51,116.60 597.83,116.67 599.15,116.75 600.47,116.82 601.78,116.90 603.08,116.98 604.38,117.06 605.67,117.15 606.96,117.23 608.24,117.32 609.51,117.42 610.78,117.51 612.05,117.61 613.30,117.71 614.55,117.82 615.80,117.92 617.03,118.03 618.27,118.14 619.49,118.26 620.71,118.37 621.92,118.49 623.12,118.61 624.32,118.73 625.51,118.86 626.69,118.99 627.86,119.12 629.03,119.25 630.19,119.39 631.34,119.53 632.49,119.67 633.63,119.81 634.75,119.96 635.88,120.11 636.99,120.26 638.09,120.41 639.19,120.57 640.28,120.72 641.36,120.88 642.43,121.05 643.49,121.21 644.55,121.38 645.59,121.55 646.63,121.72 647.66,121.89 648.68,122.07 649.69,122.24 650.69,122.43 651.68,122.61 652.66,122.79 653.64,122.98 654.60,123.17 655.56,123.36 656.50,123.55 657.44,123.75 658.36,123.95 659.28,124.15 660.18,124.35 661.08,124.55 661.97,124.76 662.84,124.97 663.71,125.18 664.56,125.39 665.41,125.60 666.25,125.82 667.07,126.03 667.89,126.25 668.69,126.48 669.48,126.70 670.27,126.93 671.04,127.15 671.80,127.38 672.55,127.61 673.29,127.85 674.02,128.08 674.74,128.32 675.45,128.55 676.14,128.79 676.83,129.04 677.50,129.28 678.17,129.52 678.82,129.77 679.46,130.02 680.09,130.27 680.71,130.52 681.31,130.77 681.91,131.03 682.49,131.28 683.06,131.54 683.62,131.80 684.17,132.06 684.71,132.32 685.23,132.59 685.74,132.85 686.25,133.12 686.73,133.39 687.21,133.66 687.68,133.93 688.13,134.20 688.57,134.47 689.00,134.75 689.42,135.02 689.83,135.30 690.22,135.58 690.60,135.86 690.97,136.14 691.32,136.42 691.67,136.70 692.00,136.99 692.32,137.27 692.63,137.56 692.92,137.85 693.21,138.14 693.48,138.42 693.73,138.72 693.98,139.01 694.21,139.30 694.43,139.59 694.64,139.89 694.84,140.18 695.02,140.48 695.19,140.77 695.35,141.07 695.49,141.37 695.62,141.67 695.74,141.97 695.85,142.27 695.95,142.57 696.03,142.87 696.10,143.17 696.16,143.48 696.20,143.78 696.23,144.09" fill="none" stroke="#22252f" stroke-width="1.2"/>
<polyline points="690.46,683.68 690.32,684.16 690.16,684.64 689.96,685.11 689.74,685.59 689.48,686.07 689.19,686.54 688.86,687.02 688.51,687.50 688.12,687.97 687.71,688.45 687.26,688.92 686.78,689.40 686.27,689.87 685.73,690.35 685.16,690.82 684.56,691.29 683.92,691.76 683.26,692.23 682.57,692.70 681.84,693.16 681.09,693.63 680.31,694.09 679.50,694.55 678.66,695.01 677.79,695.46 676.89,695.92 675.96,696.37 675.00,696.82 674.02,697.27 673.00,697.72 671.96,698.16 670.90,698.60 669.80,699.04 668.68,699.47 667.53,699.90 666.35,700.33 665.15,700.75 663.92,701.17 662.67,701.59 661.39,702.01 660.08,702.42 658.76,702.83 657.40,703.23 656.02,703.63 654.62,704.02 653.20,704.41 651.75,704.80 650.28,705.19 648.78,705.56 647.26,705.94 645.73,706.31 644.17,706.67 642.58,707.03 640.98,707.39 639.36,707.74 637.72,708.08 636.06,708.43 634.37,708.76 632.67,709.09 630.95,709.42 629.22,709.74 627.46,710.05 625.69,710.36 623.90,710.66 622.10,710.96 620.27,711.25 618.44,711.54 616.58,711.82 614.72,712.10 612.83,712.37 610.94,712.63 609.03,712.88 607.10,713.14 605.17,713.38 603.22,713.62 601.26,713.85 599.29,714.08 597.31,714.30 595.32,714.51 593.32,714.71 591.30,714.91 589.28,715.11 587.25,715.29 585.22,715.47 583.17,715.65 581.12,715.81 579.06,715.97 577.00,716.13 574.93,716.27 572.85,716.41 570.77,716.54 568.68,716.67 566.60,716.79 564.50,716.90 562.41,717.00 560.31,717.10 558.21,717.19 556.11,717.27 554.01,717.35 551.91,717.42 549.80,717.48 547.70,717.53 545.60,717.58 543.50,717.62 541.40,717.65 539.31,717.68 537.22,717.70 535.13,717.71 533.04,717.71 530.96,717.71 528.89,717.70 526.81,717.68 524.75,717.65 522.69,717.62 520.64,717.58 518.59,717.54 516.56,717.48 514.53,717.42 512.51,717.35 510.50,717.28 508.50,717.20 506.50,717.11 504.52,717.01 502.55,716.91 500.59,716.79 498.65,716.68 496.71,716.55 494.79,716.42 492.88,716.28 490.98,716.14 489.10,715.98 487.24,715.82 485.38,715.66 483.55,715.49 481.72,715.31 479.92,715.12 478.13,714.93 476.36,714.73 474.60,714.52 472.87,714.31 471.15,714.09 469.45,713.87 467.77,713.63 466.11,713.40 464.47,713.15 462.84,712.90 461.24,712.64 459.66,712.38 458.10,712.11 456.57,711.84 455.05,711.56 453.56,711.27 452.08,710.98 450.64,710.68 449.21,710.38 447.81,710.07 446.43,709.76 445.08,709.44 443.75,709.11 442.45,708.78 441.17,708.45 439.92,708.11 438.69,707.76 437.49,707.41 436.31,707.06 435.16,706.70 434.04,706.33 432.95,705.96 431.88,705.59 430.84,705.21 429.83,704.83 428.85,704.44 427.89,704.05 426.96,703.65 426.07,703.25 425.20,702.85 424.36,702.44 423.54,702.03 422.76,701.62 422.01,701.20 421.29,700.78 420.60,700.36 419.94,699.93 419.30,699.50 418.70,699.06 418.13,698.63 417.59,698.19 417.08,697.74 416.61,697.30 416.16,696.85 415.74,696.40 415.36,695.95 415.01,695.49 414.68,695.04 414.39,694.58 414.14,694.12 413.91,693.66 413.71,693.19 413.55,692.73" fill="none" stroke="#2a2d3a" stroke-width="1.2"/>
<path d="M386.6,393 L389.3,412" stroke="#2c303f" stroke-width="0.9" fill="none"/>
<path d="M399.3,533 L401.3,549" stroke="#2c303f" stroke-width="1.1" fill="none"/>
<path d="M408.6,625 L415.1,696" stroke="#262a38" stroke-width="1.1" fill="none"/>
<path d="M553.4,237.6 L553.4,245.6" stroke="#2c303f" stroke-width="1" fill="none"/>
<path d="M553.40,237.60 L554.68,237.85 L555.96,238.10 L557.23,238.34 L558.50,238.58 L559.76,238.83 L561.02,239.07 L562.29,239.31 L563.56,239.56 L564.83,239.80 L566.11,240.05" fill="none" stroke="#262a38" stroke-width="1.1"/>
<path d="M574.00,241.60 L575.37,241.88 L576.76,242.16 L578.16,242.45 L579.58,242.74 L581.01,243.04 L582.45,243.34 L583.90,243.65 L585.36,243.95 L586.81,244.25 L588.27,244.56 L589.73,244.86 L591.18,245.16" fill="none" stroke="#262a38" stroke-width="1.1"/>
<path d="M598.31,246.57 L599.71,246.84 L601.11,247.10 L602.51,247.36 L603.90,247.62 L605.29,247.87 L606.68,248.13 L608.07,248.38 L609.45,248.62 L610.83,248.87 L612.20,249.11 L613.57,249.35 L614.94,249.59" fill="none" stroke="#262a38" stroke-width="1.1"/>
<path d="M619.00,250.30 L620.33,250.53 L621.64,250.76 L622.93,250.99 L624.20,251.21 L625.46,251.43 L626.71,251.64 L627.97,251.86 L629.23,252.08 L630.49,252.29 L631.77,252.50 L633.07,252.72 L634.39,252.93 L635.74,253.14 L637.12,253.36 L638.54,253.58 L640.00,253.80 L641.52,254.02 L643.12,254.25 L644.78,254.47 L646.49,254.70 L648.23,254.93 L650.00,255.16 L651.79,255.39 L653.57,255.62 L655.35,255.85 L657.10,256.07 L658.82,256.30 L660.50,256.53 L662.11,256.75 L663.66,256.97 L665.13,257.19 L666.50,257.40 L667.79,257.61 L669.01,257.82 L670.18,258.03 L671.29,258.23 L672.36,258.43 L673.38,258.63 L674.36,258.83 L675.31,259.03 L676.23,259.23 L677.13,259.42 L678.01,259.62 L678.87,259.82 L679.73,260.01 L680.58,260.21 L681.44,260.40 L682.30,260.60 L683.15,260.80 L683.97,260.99 L684.77,261.19 L685.55,261.38 L686.31,261.58 L687.05,261.77 L687.78,261.96 L688.49,262.16 L689.20,262.35 L689.91,262.54 L690.61,262.73 L691.32,262.93 L692.02,263.12 L692.74,263.31 L693.46,263.51 L694.20,263.70" fill="none" stroke="#262a38" stroke-width="1.1"/>
<path d="M553.40,245.60 L554.22,245.79 L555.01,245.97 L555.76,246.15 L556.50,246.33 L557.22,246.50 L557.94,246.67 L558.67,246.84 L559.41,247.02 L560.18,247.20 L560.97,247.38 L561.81,247.58 L562.70,247.78 L563.64,247.99 L564.65,248.21 L565.73,248.45 L566.90,248.70" fill="none" stroke="#262a38" stroke-width="1.1"/>
<path d="M574.02,250.20 L575.63,250.54 L577.28,250.88 L578.96,251.22 L580.66,251.57 L582.37,251.92 L584.07,252.27 L585.77,252.61 L587.44,252.95 L589.07,253.28 L590.66,253.60" fill="none" stroke="#262a38" stroke-width="1.1"/>
<path d="M598.17,255.05 L599.64,255.32 L601.10,255.59 L602.55,255.86 L603.99,256.12 L605.43,256.39 L606.85,256.65 L608.25,256.91 L609.65,257.17 L611.03,257.43 L612.40,257.68 L613.76,257.94" fill="none" stroke="#262a38" stroke-width="1.1"/>
<path d="M619.99,259.20 L621.12,259.45 L622.23,259.69 L623.34,259.93 L624.46,260.17 L625.59,260.42 L626.75,260.66 L627.95,260.91 L629.19,261.16 L630.50,261.41 L631.88,261.67 L633.34,261.93 L634.90,262.20 L636.58,262.48 L638.39,262.77 L640.32,263.07 L642.34,263.37 L644.43,263.68 L646.58,264.00 L648.76,264.32 L650.95,264.63 L653.13,264.94 L655.29,265.25 L657.40,265.56 L659.43,265.85 L661.38,266.13 L663.23,266.40 L664.94,266.66 L666.50,266.90 L667.93,267.12 L669.26,267.33 L670.50,267.53 L671.65,267.71 L672.74,267.89 L673.75,268.05 L674.72,268.21 L675.63,268.37 L676.51,268.52 L677.35,268.67 L678.18,268.82 L678.99,268.96 L679.80,269.12 L680.62,269.27 L681.45,269.43 L682.30,269.60 L683.15,269.77 L683.97,269.95 L684.77,270.12 L685.55,270.29 L686.31,270.47 L687.05,270.64 L687.78,270.82 L688.49,270.99 L689.20,271.17 L689.91,271.35 L690.61,271.52 L691.32,271.70 L692.02,271.87 L692.74,272.05 L693.46,272.22 L694.20,272.40" fill="none" stroke="#262a38" stroke-width="1.1"/>
<path d="M388.70,407.70 L389.14,408.34 L389.58,408.99 L390.02,409.65 L390.46,410.30 L390.89,410.96 L391.33,411.63 L391.76,412.29 L392.20,412.94 L392.64,413.60 L393.08,414.24 L393.52,414.88 L393.97,415.51 L394.42,416.13 L394.87,416.74 L395.33,417.33 L395.80,417.90 L396.26,418.45 L396.70,418.98 L397.12,419.49 L397.53,419.98 L397.94,420.46 L398.36,420.93 L398.78,421.39 L399.21,421.84 L399.65,422.30 L400.12,422.76 L400.62,423.23 L401.15,423.71 L401.72,424.20 L402.33,424.71 L402.99,425.24 L403.70,425.80 L404.46,426.38 L405.24,426.97 L406.06,427.57 L406.91,428.19 L407.79,428.81 L408.70,429.45 L409.64,430.10 L410.61,430.75 L411.62,431.41 L412.65,432.07 L413.71,432.74 L414.81,433.41 L415.94,434.08 L417.09,434.76 L418.28,435.43 L419.50,436.10 L420.78,436.78 L422.13,437.49 L423.55,438.21 L425.03,438.95 L426.55,439.70 L428.11,440.45 L429.69,441.21 L431.29,441.96 L432.88,442.70 L434.47,443.42 L436.04,444.13 L437.58,444.81 L439.07,445.46 L440.51,446.08 L441.89,446.66 L443.20,447.20 L444.41,447.69 L445.53,448.13 L446.57,448.52 L447.54,448.87 L448.46,449.20 L449.35,449.50 L450.23,449.78 L451.11,450.05 L452.00,450.32 L452.92,450.58 L453.89,450.86 L454.92,451.15 L456.03,451.46 L457.24,451.81 L458.56,452.18 L460.00,452.60 L461.57,453.06 L463.24,453.55 L465.01,454.06 L466.86,454.60 L468.78,455.15 L470.77,455.72 L472.80,456.30 L474.88,456.89 L476.98,457.48 L479.10,458.06 L481.23,458.64 L483.35,459.21 L485.46,459.76 L487.55,460.30 L489.60,460.81 L491.60,461.30 L493.60,461.77 L495.63,462.23 L497.68,462.69 L499.76,463.14 L501.84,463.58 L503.93,464.01 L506.02,464.44 L508.09,464.85 L510.14,465.25 L512.16,465.64 L514.14,466.02 L516.07,466.39 L517.96,466.74 L519.78,467.07 L521.53,467.39 L523.20,467.70 L524.78,467.98 L526.26,468.24 L527.65,468.48 L528.98,468.70 L530.24,468.91 L531.45,469.10 L532.63,469.28" fill="none" stroke="#262a38" stroke-width="1.1"/>
<path d="M536.10,469.78 L537.27,469.93 L538.46,470.10 L539.70,470.26 L541.00,470.43 L542.36,470.61 L543.80,470.80 L545.30,471.00 L546.83,471.20 L548.39,471.39 L549.97,471.59" fill="none" stroke="#262a38" stroke-width="1.1"/>
<path d="M553.22,471.99 L554.88,472.19" fill="none" stroke="#262a38" stroke-width="1.1"/>
<path d="M558.27,472.59 L559.99,472.80 L561.74,473.00 L563.50,473.20 L565.28,473.40 L567.07,473.60 L568.88,473.80 L570.70,474.00" fill="none" stroke="#262a38" stroke-width="1.1"/>
<path d="M574.50,474.42 L576.50,474.64" fill="none" stroke="#262a38" stroke-width="1.1"/>
<path d="M582.71,475.31 L584.82,475.54 L586.93,475.76 L589.02,475.98 L591.09,476.19 L593.12,476.39 L595.10,476.58 L597.02,476.76 L598.87,476.92 L600.63,477.07 L602.30,477.20 L603.85,477.31 L605.27,477.41 L606.59,477.49 L607.82,477.56 L608.98,477.62 L610.09,477.66 L611.16,477.70 L612.22,477.73 L613.29,477.75 L614.38,477.77 L615.51,477.78 L616.70,477.79 L617.96,477.79 L619.32,477.80 L620.79,477.80 L622.40,477.80 L624.16,477.80 L626.07,477.80 L628.10,477.79 L630.24,477.78 L632.47,477.77 L634.75,477.75 L637.07,477.72 L639.41,477.69 L641.74,477.66 L644.04,477.62 L646.29,477.58 L648.46,477.54 L650.55,477.48 L652.51,477.43 L654.34,477.37 L656.00,477.30 L657.51,477.23 L658.89,477.16 L660.15,477.08 L661.32,477.01 L662.41,476.92 L663.42,476.84 L664.38,476.75 L665.29,476.65 L666.18,476.55 L667.06,476.44 L667.93,476.32 L668.82,476.19 L669.74,476.06 L670.70,475.92 L671.71,475.76 L672.80,475.60 L673.94,475.42 L675.09,475.23 L676.26,475.03 L677.45,474.82 L678.65,474.59 L679.85,474.36 L681.07,474.12 L682.29,473.88 L683.52,473.63 L684.75,473.38 L685.98,473.12 L687.22,472.87 L688.45,472.62 L689.67,472.38 L690.89,472.13 L692.10,471.90" fill="none" stroke="#262a38" stroke-width="1.1"/>
<path d="M388.70,411.60 L389.14,412.35 L389.58,413.11 L390.02,413.88 L390.46,414.65 L390.89,415.43 L391.33,416.20 L391.76,416.98 L392.20,417.75 L392.64,418.52 L393.08,419.27 L393.52,420.02 L393.97,420.75 L394.42,421.47 L394.87,422.17 L395.33,422.84 L395.80,423.50 L396.26,424.13 L396.70,424.73 L397.12,425.31 L397.53,425.86 L397.94,426.40 L398.36,426.93 L398.78,427.44 L399.21,427.95 L399.65,428.46 L400.12,428.96 L400.62,429.47 L401.15,429.99 L401.72,430.52 L402.33,431.06 L402.99,431.62 L403.70,432.20 L404.46,432.80 L405.24,433.41 L406.06,434.02 L406.91,434.65 L407.79,435.28 L408.70,435.91 L409.64,436.56 L410.61,437.21 L411.62,437.86 L412.65,438.52 L413.71,439.18 L414.81,439.84 L415.94,440.50 L417.09,441.17 L418.28,441.83 L419.50,442.50 L420.78,443.18 L422.13,443.87 L423.55,444.58 L425.03,445.30 L426.55,446.03 L428.11,446.76 L429.69,447.50 L431.29,448.23 L432.88,448.95 L434.47,449.66 L436.04,450.36 L437.58,451.04 L439.07,451.69 L440.51,452.33 L441.89,452.93 L443.20,453.50 L444.41,454.03 L445.53,454.53 L446.57,454.99 L447.54,455.42 L448.46,455.83 L449.35,456.23 L450.23,456.61 L451.11,456.98 L452.00,457.34 L452.92,457.71 L453.89,458.08 L454.92,458.46 L456.03,458.86 L457.24,459.28 L458.56,459.73 L460.00,460.20 L461.57,460.70 L463.24,461.23 L465.01,461.78 L466.86,462.34 L468.78,462.92 L470.77,463.50 L472.80,464.10 L474.88,464.69 L476.98,465.29 L479.10,465.89 L481.23,466.47 L483.35,467.05 L485.46,467.62 L487.55,468.16 L489.60,468.69 L491.60,469.20 L493.60,469.69 L495.63,470.18 L497.68,470.67 L499.76,471.15 L501.84,471.63 L503.93,472.09 L506.02,472.55 L508.09,472.99 L510.14,473.43 L512.16,473.85 L514.14,474.25 L516.07,474.64 L517.96,475.01 L519.78,475.36 L521.53,475.69 L523.20,476.00 L524.78,476.28 L526.26,476.53 L527.65,476.75 L528.98,476.95 L530.24,477.13 L531.45,477.29 L532.63,477.44 L533.79,477.58 L534.94,477.70 L536.10,477.83 L537.27,477.96 L538.46,478.09 L539.70,478.22 L541.00,478.37 L542.36,478.53 L543.80,478.70 L545.30,478.89 L546.83,479.08 L548.39,479.28 L549.97,479.48 L551.58,479.68 L553.22,479.89 L554.88,480.09 L556.56,480.30" fill="none" stroke="#262a38" stroke-width="1.1"/>
<path d="M559.99,480.71 L561.74,480.92 L563.50,481.12 L565.28,481.32 L567.07,481.52 L568.88,481.71 L570.70,481.90" fill="none" stroke="#262a38" stroke-width="1.1"/>
<path d="M576.38,482.46 L578.34,482.65" fill="none" stroke="#262a38" stroke-width="1.1"/>
<path d="M584.37,483.22 L586.40,483.40 L588.44,483.58 L590.47,483.75 L592.50,483.91 L594.51,484.07 L596.50,484.22 L598.47,484.36 L600.40,484.48 L602.30,484.60 L604.17,484.71 L606.03,484.80 L607.88,484.89 L609.72,484.97 L611.55,485.05 L613.36,485.11 L615.16,485.17 L616.95,485.23 L618.73,485.27 L620.49,485.31 L622.24,485.34 L623.98,485.36 L625.70,485.38 L627.42,485.39 L629.12,485.40 L630.80,485.40 L632.48,485.39 L634.17,485.37 L635.85,485.35 L637.53,485.31 L639.20,485.27 L640.86,485.22 L642.51,485.17 L644.13,485.11 L645.73,485.04 L647.31,484.97 L648.86,484.90 L650.37,484.82 L651.84,484.74 L653.27,484.66 L654.66,484.58 L656.00,484.50 L657.28,484.42 L658.48,484.33 L659.63,484.24 L660.73,484.15 L661.79,484.05 L662.81,483.96 L663.80,483.85 L664.77,483.75 L665.73,483.64 L666.69,483.53 L667.65,483.42 L668.62,483.30 L669.62,483.18 L670.64,483.06 L671.70,482.93 L672.80,482.80 L673.94,482.67 L675.09,482.53 L676.26,482.38 L677.45,482.23 L678.65,482.08 L679.85,481.92 L681.07,481.76 L682.29,481.60 L683.52,481.44 L684.75,481.27 L685.98,481.11 L687.22,480.94 L688.45,480.78 L689.67,480.62 L690.89,480.46 L692.10,480.30" fill="none" stroke="#262a38" stroke-width="1.1"/>
<path d="M401.10,542.90 L401.37,543.39 L401.61,543.87 L401.82,544.35 L402.01,544.82 L402.20,545.29 L402.37,545.76 L402.56,546.23 L402.76,546.70 L402.98,547.18 L403.22,547.66 L403.51,548.15 L403.84,548.66 L404.23,549.17 L404.68,549.70 L405.20,550.24 L405.80,550.80 L406.45,551.38 L407.14,551.97 L407.85,552.57 L408.60,553.19 L409.39,553.81 L410.22,554.45 L411.09,555.10 L412.02,555.75 L413.00,556.41 L414.03,557.07 L415.12,557.74 L416.28,558.41 L417.50,559.08 L418.79,559.76 L420.16,560.43 L421.60,561.10 L423.14,561.78 L424.79,562.48 L426.55,563.19 L428.39,563.91 L430.30,564.64 L432.29,565.38 L434.33,566.12 L436.41,566.85 L438.52,567.58 L440.65,568.30 L442.79,569.00 L444.92,569.69 L447.04,570.35 L449.14,571.00 L451.19,571.61 L453.20,572.20 L455.18,572.76 L457.16,573.30 L459.14,573.81 L461.12,574.31 L463.10,574.79 L465.08,575.26 L467.07,575.71 L469.05,576.15 L471.03,576.58 L473.02,576.99 L475.00,577.39 L476.98,577.79 L478.96,578.17 L480.94,578.55 L482.92,578.93 L484.90,579.30 L486.91,579.67 L488.98,580.03 L491.09,580.38 L493.23,580.73 L495.39,581.07" fill="none" stroke="#262a38" stroke-width="1.1"/>
<path d="M501.84,582.04 L503.93,582.34 L505.98,582.62 L507.97,582.89 L509.87,583.15 L511.70,583.39 L513.42,583.61 L515.02,583.82 L516.50,584.00 L517.83,584.16 L519.03,584.29 L520.10,584.40" fill="none" stroke="#262a38" stroke-width="1.1"/>
<path d="M526.82,584.75 L527.52,584.77 L528.28,584.80 L529.10,584.85 L530.00,584.90 L530.93,584.96 L531.83,585.02 L532.71,585.09 L533.57,585.15 L534.44,585.21 L535.32,585.27 L536.22,585.34 L537.14,585.40 L538.11,585.47 L539.12,585.53 L540.20,585.61" fill="none" stroke="#262a38" stroke-width="1.1"/>
<path d="M545.28,585.91 L546.80,586.00 L548.44,586.09 L550.20,586.20 L552.06,586.31 L554.02,586.43 L556.06,586.55 L558.17,586.68 L560.34,586.81 L562.55,586.94" fill="none" stroke="#262a38" stroke-width="1.1"/>
<path d="M571.61,587.40 L573.86,587.50 L576.09,587.58 L578.27,587.65 L580.40,587.70 L582.50,587.74 L584.60,587.78 L586.70,587.81 L588.80,587.83 L590.90,587.84 L593.00,587.85 L595.10,587.85 L597.20,587.84 L599.30,587.83 L601.40,587.80 L603.50,587.76 L605.60,587.71 L607.70,587.65 L609.80,587.58 L611.90,587.50 L614.00,587.40 L616.12,587.29 L618.26,587.16 L620.42,587.02 L622.60,586.87 L624.78,586.70 L626.97,586.53 L629.15,586.34 L631.32,586.14 L633.48,585.94 L635.62,585.73 L637.72,585.52 L639.79,585.30 L641.82,585.08 L643.80,584.85 L645.73,584.63 L647.60,584.40 L649.42,584.17 L651.20,583.94 L652.95,583.69 L654.67,583.45 L656.35,583.19 L658.00,582.93 L659.62,582.67 L661.20,582.41 L662.75,582.14 L664.28,581.86 L665.77,581.59 L667.23,581.31 L668.67,581.04 L670.07,580.76 L671.45,580.48 L672.80,580.20 L674.11,579.92 L675.36,579.64 L676.57,579.35 L677.73,579.06 L678.86,578.77 L679.96,578.47 L681.03,578.18 L682.07,577.88 L683.11,577.58 L684.13,577.28 L685.16,576.99 L686.18,576.69 L687.21,576.39 L688.25,576.09 L689.31,575.79 L690.40,575.50" fill="none" stroke="#262a38" stroke-width="1.1"/>
<path d="M401.10,547.70 L401.37,548.24 L401.61,548.78 L401.82,549.32 L402.01,549.86 L402.20,550.40 L402.37,550.93 L402.56,551.47 L402.76,552.01 L402.98,552.55 L403.22,553.09 L403.51,553.63 L403.84,554.18 L404.23,554.73 L404.68,555.28 L405.20,555.84 L405.80,556.40 L406.45,556.96 L407.14,557.52 L407.85,558.07 L408.60,558.62 L409.39,559.18 L410.22,559.73 L411.09,560.29 L412.02,560.85 L413.00,561.42 L414.03,562.00 L415.12,562.60 L416.28,563.20 L417.50,563.82 L418.79,564.46 L420.16,565.12 L421.60,565.80 L423.14,566.51 L424.79,567.26 L426.55,568.05 L428.39,568.86 L430.30,569.69 L432.29,570.53 L434.33,571.39 L436.41,572.24 L438.52,573.10 L440.65,573.94 L442.79,574.77 L444.92,575.59 L447.04,576.37 L449.14,577.12 L451.19,577.83 L453.20,578.50 L455.18,579.13 L457.16,579.74 L459.14,580.32 L461.12,580.89 L463.10,581.43 L465.08,581.95 L467.07,582.46 L469.05,582.95 L471.03,583.42 L473.02,583.88 L475.00,584.33 L476.98,584.76 L478.96,585.19 L480.94,585.60 L482.92,586.00 L484.90,586.40 L486.91,586.79 L488.98,587.16 L491.09,587.52 L493.23,587.87 L495.39,588.21 L497.55,588.53" fill="none" stroke="#262a38" stroke-width="1.1"/>
<path d="M501.84,589.14 L503.93,589.42 L505.98,589.70 L507.97,589.96 L509.87,590.21 L511.70,590.45 L513.42,590.68 L515.02,590.89 L516.50,591.10 L517.83,591.29" fill="none" stroke="#262a38" stroke-width="1.1"/>
<path d="M521.07,591.74 L521.94,591.86 L522.74,591.96 L523.48,592.06 L524.17,592.14 L524.84,592.22 L525.49,592.30 L526.15,592.38 L526.82,592.45 L527.52,592.53 L528.28,592.61 L529.10,592.70 L530.00,592.80 L530.93,592.90 L531.83,593.01 L532.71,593.12 L533.57,593.22 L534.44,593.33 L535.32,593.44 L536.22,593.54 L537.14,593.65 L538.11,593.75 L539.12,593.86 L540.20,593.96" fill="none" stroke="#262a38" stroke-width="1.1"/>
<path d="M548.42,594.48 L550.14,594.56 L551.94,594.63 L553.82,594.71 L555.78,594.78 L557.80,594.85 L559.89,594.92 L562.02,594.98" fill="none" stroke="#262a38" stroke-width="1.1"/>
<path d="M568.72,595.15 L571.02,595.19 L573.34,595.23 L575.68,595.26 L578.04,595.28 L580.40,595.30 L582.83,595.31" fill="none" stroke="#262a38" stroke-width="1.1"/>
<path d="M593.47,595.33 L596.27,595.32 L599.10,595.31 L601.92,595.29 L604.74,595.26 L607.51,595.22 L610.23,595.18 L612.88,595.13 L615.44,595.06 L617.90,594.99 L620.22,594.90 L622.40,594.80 L624.44,594.69 L626.35,594.56 L628.16,594.42 L629.88,594.27 L631.52,594.11 L633.08,593.95 L634.59,593.77 L636.05,593.58 L637.48,593.39 L638.89,593.19 L640.29,592.98 L641.69,592.77 L643.11,592.56 L644.56,592.34 L646.06,592.12 L647.60,591.90 L649.19,591.67 L650.80,591.44 L652.43,591.19 L654.08,590.94 L655.73,590.68 L657.38,590.42 L659.03,590.15 L660.67,589.88 L662.30,589.61 L663.91,589.33 L665.49,589.06 L667.03,588.78 L668.55,588.51 L670.01,588.23 L671.43,587.96 L672.80,587.70 L674.11,587.44 L675.36,587.18 L676.57,586.91 L677.73,586.65 L678.86,586.39 L679.96,586.12 L681.03,585.86 L682.07,585.60 L683.11,585.34 L684.13,585.08 L685.16,584.81 L686.18,584.55 L687.21,584.29 L688.25,584.03 L689.31,583.76 L690.40,583.50" fill="none" stroke="#262a38" stroke-width="1.1"/>
<path d="M530.1,141.6 L553,716" stroke="#976a70" stroke-width="1.05" fill="none" stroke-dasharray="5.5 2.5 1.5 2.8"/>
<path d="M526.8,688.5 L552.5,688.5 M552.5,688.5 L543.6,695.2 M552.5,688.5 L553,714.5" stroke="#8a5a50" stroke-width="1.1" fill="none"/>
<path d="M533,686.5 L537,688.5 L533,690.5 Z M551,705 L553,710 L555,705 Z M545,691 L548.5,692.2 L546,695 Z" fill="#8a5a50"/>
<text x="516.5" y="687" font-family="Liberation Sans" font-size="12" fill="#3c3c44" textLength="7" lengthAdjust="spacingAndGlyphs">Z</text>
<text x="532.5" y="705.6" font-family="Liberation Sans" font-size="12" fill="#3c3c44" textLength="8" lengthAdjust="spacingAndGlyphs">Y</text>
<text x="555" y="727" font-family="Liberation Sans" font-size="12" fill="#3c3c44" textLength="9" lengthAdjust="spacingAndGlyphs">X</text>
<text x="555" y="687" font-family="Liberation Sans" font-size="12.5" fill="#8a5a50" textLength="91.5" lengthAdjust="spacingAndGlyphs">PRT_CSYS_DEF</text>
</svg>
<div class="a" style="left:735px;top:108px;width:247.5px;height:22.5px;background:#f7f8f9;border:1px solid #c5c9cc;border-radius:1px;"></div>
<svg class="a" style="left:0;top:0" width="1012" height="140" viewBox="0 0 1012 140">
<!-- 1 zoom fit -->
<rect x="741.5" y="114.5" width="11" height="10.5" fill="#ececec" stroke="#b4b4b4" stroke-width="1"/>
<circle cx="746.5" cy="119.3" r="3.2" fill="#ffffff" stroke="#4aa4d8" stroke-width="1.2"/>
<path d="M749,121.8 l3.6,3.6" stroke="#8a8a8a" stroke-width="1.5"/>
<!-- 2 zoom in -->
<circle cx="766" cy="118.5" r="4.2" fill="#eaf6fc" stroke="#3a98cc" stroke-width="1.2"/>
<path d="M763.7,118.5 h4.6 M766,116.2 v4.6" stroke="#1f78b0" stroke-width="1.6"/>
<path d="M769.3,121.8 l4,4" stroke="#9a9a9a" stroke-width="1.8"/>
<!-- 3 zoom out -->
<circle cx="786" cy="118.5" r="4.2" fill="#eaf6fc" stroke="#3a98cc" stroke-width="1.2"/>
<path d="M783.7,118.5 h4.6" stroke="#1f78b0" stroke-width="1.6"/>
<path d="M789.3,121.8 l4,4" stroke="#9a9a9a" stroke-width="1.8"/>
<!-- 4 refit -->
<rect x="802.5" y="114.5" width="11.5" height="11.5" fill="#eaf6fb" stroke="#b8b8b8" stroke-width="1"/>
<path d="M803,126 L814,115 V126 Z" fill="#7ec6ea"/>
<path d="M803.5,125.5 L813.5,115.5" stroke="#1f6ea8" stroke-width="1.3"/>
<!-- 5 shading -->
<defs><radialGradient id="shg" cx="0.35" cy="0.35" r="0.7"><stop offset="0" stop-color="#ffffff"/><stop offset="0.6" stop-color="#9a9a9a"/><stop offset="1" stop-color="#5a5a5a"/></radialGradient></defs>
<circle cx="826.5" cy="122" r="3.6" fill="url(#shg)"/>
<circle cx="831.5" cy="117.5" r="3.8" fill="url(#shg)"/>
<path d="M824,124 Q829,123 833,119" stroke="#7a7a7a" stroke-width="1.5" fill="none"/>
<path d="M835.5,126.5 h2 v-2 z" fill="#444"/>
<!-- 6 saved orientation cube -->
<path d="M843.5,117.5 l3,-3 h10 v9.5 l-3,3 h-10 z" fill="#bfe4f6" stroke="#3a90c4" stroke-width="1.1"/>
<rect x="843.5" y="117.5" width="10" height="9.5" fill="#ffffff" stroke="#3a90c4" stroke-width="1.1"/>
<path d="M853.5,117.5 l3,-3" stroke="#3a90c4" stroke-width="1"/>
<path d="M856.5,127.5 h2 v-2 z" fill="#444"/>
<!-- 7 display style -->
<rect x="864" y="114.5" width="11.5" height="11.5" fill="#f4fbfe" stroke="#7cc4e8" stroke-width="1"/>
<path d="M864,114.5 h11.5 v11.5" fill="none" stroke="#4aa8dc" stroke-width="1.3"/>
<rect x="872" y="120" width="5.5" height="6.5" fill="#d8d8d8" stroke="#a8a8a8" stroke-width="0.8"/>
<path d="M877.5,127.5 h2 v-2 z" fill="#444"/>
<!-- 8 view manager -->
<rect x="885.5" y="114.5" width="10" height="11.5" fill="#f0f0f0" stroke="#b0b0b0" stroke-width="0.9"/>
<path d="M885.5,117.5 h10 M885.5,120.5 h6 M885.5,123.5 h5 M888.5,114.5 v11.5" stroke="#b8b8b8" stroke-width="0.8"/>
<rect x="890.5" y="120.5" width="7.5" height="5.5" rx="1" fill="#3a3a3a"/>
<circle cx="894.2" cy="123.2" r="1.5" fill="#dcdcdc"/>
<!-- 9 wireframe cube -->
<path d="M905.5,117.5 l4,-3.5 h8 v8.5 l-4,3.5 h-8 z" fill="#cfe9f8" stroke="#5aaee0" stroke-width="1"/>
<path d="M905.5,117.5 h8 v8.5 M913.5,117.5 l4,-3.5 M909.5,114 v8.5 h8 M909.5,122.5 l-4,3.5" fill="none" stroke="#7cc0e6" stroke-width="0.8"/>
<!-- 10 datum display -->
<g stroke="#8b6a3b" stroke-width="1.2">
 <path d="M925,114.5 l2.5,2.5 M927.5,114.5 l-2.5,2.5"/>
 <path d="M931.5,117 l1.2,-2.4" />
 <path d="M929.5,121.5 l1,-2 M927.5,125.5 l1,-2"/>
 <path d="M931,122.5 h2 M934.5,122.5 h2 M932.5,120.5 v4"/>
</g>
<path d="M939,127.5 h2 v-2 z" fill="#444"/>
<!-- 11 annotation display -->
<rect x="946.5" y="114.5" width="9" height="5" fill="#fbf0c8" stroke="#a8a8a8" stroke-width="0.8"/>
<path d="M955.5,117 h2 v4 M956,120 l1.5,1.5 l1.5,-1.5" fill="none" stroke="#333" stroke-width="1"/>
<path d="M950,124 q3.5,-3 7,0 q-3.5,3 -7,0 z" fill="#ffffff" stroke="#222" stroke-width="1.1"/>
<circle cx="953.5" cy="124" r="1.1" fill="#222"/>
<!-- 12 spin center -->
<path d="M969,116.5 L972.5,120.5 L977.5,119.5 M972.5,120.5 L968.5,124.5" fill="none" stroke="#4a4a4a" stroke-width="1"/>
<circle cx="968.8" cy="116" r="1.9" fill="#6cc86a" stroke="#3a9a3a" stroke-width="0.6"/>
<circle cx="977.2" cy="119.8" r="1.9" fill="#e87070" stroke="#b04040" stroke-width="0.6"/>
<circle cx="968.5" cy="124.8" r="1.9" fill="#4a9ad0" stroke="#2a70a8" stroke-width="0.6"/>
</svg>

<!-- left panel -->
<div class="a" style="left:0;top:103px;width:234px;height:626px;background:#dde2e4;"></div>
<div class="a" style="left:0;top:125px;width:232px;height:604px;background:#f7f9fa;"></div>
<div class="a" style="left:0;top:103px;width:76.5px;height:22px;background:#f7f9fa;"></div>
<div class="a" style="left:24px;top:147.5px;width:168px;height:18.5px;background:#ffffff;border:1px solid #c9cdd0;"></div>
<div class="a" style="left:5px;top:347px;width:223px;height:2px;background:#5fc04a;"></div>
<svg class="a" style="left:0;top:100px" width="234" height="260" viewBox="0 100 234 260">
<!-- Model tree tab icon -->
<g fill="none" stroke="#505050" stroke-width="1">
 <rect x="8" y="106.5" width="3" height="3"/><rect x="8" y="112" width="3" height="3"/><rect x="8" y="117.5" width="3" height="3"/><rect x="14.5" y="112" width="3" height="3"/>
 <path d="M9.5,109.5 v2.5 M9.5,115 v2.5 M11,113.5 h3.5"/>
</g>
<!-- Folder browser icon -->
<g fill="#fbe7b6" stroke="#d2ad6a" stroke-width="0.9">
 <path d="M82.5,108.5 q0,-1.5 1.5,-1.5 h3 l1,1 h3 q1,0 1,1 v5 h-9.5 z"/>
 <path d="M85,112 q0,-1.5 1.5,-1.5 h3 l1,1 h3 q1,0 1,1 v5 h-9.5 z"/>
 <path d="M87.5,115.5 q0,-1.5 1.5,-1.5 h3 l1,1 h4.5 q1,0 1,1 v5.5 h-11 z"/>
</g>
<!-- Favorites icon -->
<g>
 <path d="M170.5,110 q0,-1.3 1.3,-1.3 h3.5 l1,1.3 h6.4 q1,0 1,1 v8.3 h-13.2 z" fill="#fbe7b6" stroke="#d2ad6a" stroke-width="0.9"/>
 <path d="M177,112 l2,2 l-2,2 l-2,-2 z" fill="#2a7fc0"/>
</g>
<!-- fade for Folder Browse -->
<defs><linearGradient id="fadeg" x1="0" x2="1"><stop offset="0" stop-color="#dde2e4" stop-opacity="0"/><stop offset="1" stop-color="#dde2e4" stop-opacity="1"/></linearGradient></defs>
<!-- hammer + screwdriver -->
<g>
 <path d="M141.5,130 h7.5 v2.5 h-7.5 z" fill="#8a8a8a"/>
 <path d="M141,129.2 q2,-1 4,0" fill="none" stroke="#8a8a8a" stroke-width="1"/>
 <rect x="143.8" y="132.5" width="2.6" height="11" rx="1" fill="#d8b57a" stroke="#a8844a" stroke-width="0.6"/>
 <rect x="149.8" y="129" width="0.9" height="7" fill="#777"/>
 <rect x="148.8" y="136" width="2.8" height="7.8" rx="1.2" fill="#d8b57a" stroke="#a8844a" stroke-width="0.6"/>
</g>
<!-- doc icon -->
<g>
 <path d="M174.5,129.5 h8 l4,4 v10 h-12 z" fill="#f4f6f8" stroke="#9aa0a6" stroke-width="1"/>
 <path d="M177,134.5 h1.5 M179.5,134.5 h5 M177,137.5 h1.5 M179.5,137.5 h5 M177,140.5 h1.5 M179.5,140.5 h5" stroke="#777" stroke-width="1"/>
</g>
<!-- tree settings icon (disabled) -->
<g fill="none" stroke="#c0c4c8" stroke-width="0.9">
 <rect x="209.5" y="129.5" width="2.5" height="2.5"/><rect x="209.5" y="135" width="2.5" height="2.5"/><rect x="209.5" y="140.5" width="2.5" height="2.5"/>
 <path d="M214.5,130 v12 M218,130 v7 M221.5,130 v6"/>
 <rect x="215" y="135" width="2.5" height="2.5"/>
 <path d="M216,140.5 q3.5,-3 7,0 q-3.5,3 -7,0 z" stroke="#a8acb0"/>
 <path d="M221.5,142 l3,2.5" stroke="#a8acb0"/>
</g>
<!-- funnel -->
<path d="M8.5,152.5 h12 l-4.8,5 v5.5 h-2.4 v-5.5 z" fill="none" stroke="#6a6a6a" stroke-width="1"/>
<!-- clear x -->
<path d="M184,155.5 l5.5,5.5 M189.5,155.5 l-5.5,5.5" stroke="#8a8a8a" stroke-width="1"/>
<!-- + -->
<path d="M218,153.2 v8.3 M213.8,157.3 h8.2" stroke="#7a7a7a" stroke-width="2"/>
<!-- header arrows -->
<path d="M161,135.5 h5.5 l-2.75,3 z M193.6,135.5 h5.5 l-2.75,3 z M198.6,156 h6 l-3,3 z" fill="#4a4c55"/>
<!-- part icon -->
<g>
 <path d="M8.5,178 L11,175.5 H18.5 V182.5 L16,185 H8.5 Z" fill="#9cd6f2" stroke="#4aa8d8" stroke-width="0.9"/>
 <path d="M8.5,178 H16 V185 M16,178 L18.5,175.5" fill="none" stroke="#4aa8d8" stroke-width="0.8"/>
</g>
<!-- plane icons -->
<g fill="none" stroke="#8b6a3b" stroke-width="1.3">
 <path d="M23.8,198 h8 l2.8,-5.5 h-8 z"/>
 <path d="M23.8,213.3 h8 l2.8,-5.5 h-8 z"/>
 <path d="M23.8,228.6 h8 l2.8,-5.5 h-8 z"/>
</g>
<!-- csys -->
<g stroke="#8b6a3b" stroke-width="1.2" fill="#8b6a3b">
 <path d="M27.2,236.5 V244.5 H34.5 M27.2,244.5 L23.8,247.8" fill="none"/>
 <circle cx="27.2" cy="236.3" r="0.8"/><circle cx="34.6" cy="244.5" r="0.8"/><circle cx="23.7" cy="247.9" r="0.8"/>
</g>
<!-- expander triangles -->
<path d="M12.2,254.6 L17.9,257.9 L12.2,261.2 Z M12.2,270 L17.9,273.3 L12.2,276.6 Z M12.2,285.4 L17.9,288.7 L12.2,292 Z M12.2,316.4 L17.9,319.7 L12.2,323 Z" fill="#7c7c7c"/>
<!-- revolve icons -->
<g id="rv">
 <path d="M28.5,251.5 V264" stroke="#9a9a9a" stroke-width="0.8" stroke-dasharray="1.5 1"/>
 <ellipse cx="25.8" cy="257.8" rx="2.6" ry="2.4" fill="#ffffff" stroke="#9aa4aa" stroke-width="1"/>
 <ellipse cx="31.6" cy="257.8" rx="2.8" ry="2.6" fill="#5ab4e4" stroke="#2a8cc6" stroke-width="1"/>
 <circle cx="31.6" cy="257.8" r="1" fill="#ffffff"/>
</g>
<g transform="translate(0,15.4)">
 <path d="M28.5,251.5 V264" stroke="#9a9a9a" stroke-width="0.8" stroke-dasharray="1.5 1"/>
 <ellipse cx="25.8" cy="257.8" rx="2.6" ry="2.4" fill="#ffffff" stroke="#9aa4aa" stroke-width="1"/>
 <ellipse cx="31.6" cy="257.8" rx="2.8" ry="2.6" fill="#5ab4e4" stroke="#2a8cc6" stroke-width="1"/>
 <circle cx="31.6" cy="257.8" r="1" fill="#ffffff"/>
</g>
<!-- helical sweep -->
<path d="M23,292 q0,-6 2,-6 q2,0 2,6 q0,-6 2,-6 q2,0 2,6 q0,-6 2,-6 q2,0 2,6" fill="none" stroke="#3a9ad0" stroke-width="1.2"/>
<path d="M22.5,292.2 h12.5" stroke="#3a9ad0" stroke-width="0.8" opacity="0.6"/>
<!-- merge 1 / merge 2 -->
<g fill="none" stroke="#3a8cc0" stroke-width="1.1">
 <path d="M27.5,301.5 V298.5 H34.5 V305.5 H31.5"/>
 <circle cx="27.5" cy="305.5" r="4.3"/>
 <path d="M27.5,301.5 V305.5 H31.5" stroke="#9ab8cc" stroke-width="0.7"/>
</g>
<g fill="none" stroke="#3a8cc0" stroke-width="1.1" transform="translate(0,31)">
 <path d="M27.5,301.5 V298.5 H34.5 V305.5 H31.5"/>
 <circle cx="27.5" cy="305.5" r="4.3"/>
 <path d="M27.5,301.5 V305.5 H31.5" stroke="#9ab8cc" stroke-width="0.7"/>
</g>
<!-- extrude 1 -->
<g>
 <path d="M23.5,317 L27.5,313.5 H35 L31,317 Z" fill="#bfe6f8" stroke="#7fc0e0" stroke-width="0.7"/>
 <path d="M31,317 L35,313.5 V322 L31,325.5 Z" fill="#5fb0d8" stroke="#4aa0cc" stroke-width="0.7"/>
 <rect x="23.5" y="317" width="7.5" height="8.5" fill="#f0f0f0" stroke="#a8a8a8" stroke-width="0.8"/>
</g>
</svg>

<div class="sep" style="left:114px;"></div>
<div class="sep" style="left:227px;"></div>
<div class="sep" style="left:396px;"></div>
<div class="sep" style="left:510px;"></div>
<div class="sep" style="left:636px;"></div>
<div class="sep" style="left:836px;"></div>
<div class="sep" style="left:945px;"></div>
<svg class="a" style="left:0;top:0" width="1012" height="125" viewBox="0 0 1012 125">
<!-- Regenerate -->
<g>
 <rect x="15.5" y="24.5" width="6" height="6" fill="#e2f5fd" stroke="#b8e0f2" stroke-width="0.8"/>
 <rect x="15.5" y="33" width="6" height="6" fill="#e2f5fd" stroke="#b8e0f2" stroke-width="0.8"/>
 <rect x="15.5" y="41.5" width="6" height="6" fill="#e2f5fd" stroke="#b8e0f2" stroke-width="0.8"/>
 <path d="M16,30.5 h5.5 v-5.5" fill="none" stroke="#2a8cc0" stroke-width="1.4"/>
 <path d="M16,39 h5.5 v-5.5" fill="none" stroke="#2a8cc0" stroke-width="1.4"/>
 <path d="M16,47.5 h5.5 v-5.5" fill="none" stroke="#2a8cc0" stroke-width="1.4"/>
 <path d="M30.3,25.8 Q34.2,24.6 35.4,28.8" fill="none" stroke="#0f5a82" stroke-width="2.4"/>
 <path d="M32,28.3 L38.6,28.3 L35.2,32.2 Z" fill="#0f5a82"/>
 <path d="M29.3,30.2 Q29.2,34.2 33.4,34.4" fill="none" stroke="#0f5a82" stroke-width="2.4"/>
 <path d="M25.4,30.9 L28.9,27.3 L31.8,31 Z" fill="#0f5a82"/>
 <path d="M24,40.5 h14.5 M24,43.5 h14.5 M24,46.5 h13" stroke="#7d7d7d" stroke-width="1.3"/>
</g>
<!-- Copy -->
<g fill="#e0e0e0" stroke="#c2c2c2" stroke-width="1">
 <path d="M56.5,24.5 h5 l2,2 v6 h-7 z"/>
 <path d="M61.5,29.5 h5 l2.5,2.5 v4.5 h-7.5 z"/>
</g>
<!-- Paste -->
<g fill="#e0e0e0" stroke="#c2c2c2" stroke-width="1">
 <path d="M56.5,46.5 h8 v10.5 h-8 z"/>
 <path d="M59,45 h3 v2 h-3 z"/>
 <path d="M62.5,51.5 h4 l2.5,2.5 v3.5 h-6.5 z"/>
</g>
<!-- Delete X -->
<path d="M57.5,66.5 L67,76.5 M67,66.5 L57.5,76.5" stroke="#9a9a9a" stroke-width="1.6"/>
<!-- UDF -->
<g>
 <path d="M120.2,29.5 L125,28.5 L125,34.5 L120.2,35.5 Z" fill="#8fd0f0" stroke="#3a9ad0" stroke-width="0.8"/>
 <circle cx="129.8" cy="27.8" r="2.8" fill="#b8c8ee" stroke="#5a78c0" stroke-width="0.9"/>
 <path d="M127,25.5 L131.8,35 Q127,37 122.5,35 Z" fill="#d8b888" stroke="#a08458" stroke-width="0.7"/>
</g>
<!-- Copy Geometry -->
<g>
 <rect x="120.2" y="46" width="1.6" height="9" fill="#3a4c8a"/>
 <path d="M122.5,45.2 h7 v4" fill="none" stroke="#9a9a9a" stroke-width="1"/>
 <rect x="123" y="49" width="2.4" height="2.4" fill="#222"/>
 <rect x="126" y="50" width="2.2" height="7.2" fill="#1e6fa3"/>
 <rect x="128.6" y="50" width="3.6" height="7.2" fill="#a8dbf2"/>
</g>
<!-- Shrinkwrap -->
<g>
 <rect x="120.5" y="65.5" width="9" height="10.5" fill="#f1d9a8" stroke="#c9a46a" stroke-width="1"/>
 <rect x="123" y="65.5" width="8.5" height="7.5" fill="#5ab8e4" stroke="#2d88bd" stroke-width="0.8"/>
 <rect x="125.5" y="68" width="2.6" height="2.6" fill="#1a2a3a"/>
 <rect x="127.5" y="73" width="4.5" height="4.5" fill="#a8dcf4"/>
</g>
<!-- Plane -->
<path d="M234.2,43.5 L250,43.5 L256,28.5 L240.2,28.5 Z" fill="none" stroke="#8b6a3b" stroke-width="1.7"/>
<!-- Axis -->
<path d="M267.5,36 L272.8,24.5" stroke="#8b6a3b" stroke-width="1.5" stroke-dasharray="3 1.6"/>
<!-- Point box -->
<rect x="261.5" y="42.5" width="53.5" height="17.5" fill="#d9f0fc" stroke="#a4d6f2" stroke-width="1"/>
<path d="M303.5,43 v17" stroke="#a4d6f2" stroke-width="1"/>
<g stroke="#8b6a3b" stroke-width="1.3">
 <path d="M265.6,46.1 l4,3.2 M269.6,46.1 l-4,3.2"/>
 <path d="M272,47.8 l3.6,3 M275.6,47.8 l-3.6,3"/>
 <path d="M264.4,52.3 l3.8,3.4 M268.2,52.3 l-3.8,3.4"/>
</g>
<!-- Coordinate system -->
<g stroke="#8b6a3b" stroke-width="1.2" fill="#8b6a3b">
 <path d="M268.2,65.5 V73.5 H276 M268.2,73.5 L264.8,77" fill="none"/>
 <circle cx="268.2" cy="65.5" r="0.9"/><circle cx="276.3" cy="73.5" r="0.9"/><circle cx="264.8" cy="77" r="0.9"/>
</g>
<!-- Sketch -->
<g fill="#9a9a9a">
 <rect x="366.5" y="26.5" width="1" height="1"/><rect x="373" y="26.5" width="1" height="1"/><rect x="379" y="26.5" width="1" height="1"/><rect x="385" y="26.5" width="1" height="1"/>
 <rect x="366.5" y="39" width="1" height="1"/><rect x="373" y="33" width="1" height="1"/><rect x="379" y="33" width="1" height="1"/><rect x="385" y="33" width="1" height="1"/>
 <rect x="373" y="39" width="1" height="1"/><rect x="385" y="39" width="1" height="1"/>
 <rect x="366.5" y="45" width="1" height="1"/><rect x="373" y="45" width="1" height="1"/><rect x="379" y="45" width="1" height="1"/><rect x="385" y="45" width="1" height="1"/>
</g>
<path d="M367,34.5 C369.5,29 374,28 376,32.5 L378.5,39 C380.5,43.5 384.5,42.5 386.2,38" fill="none" stroke="#3aa3da" stroke-width="2"/>
<!-- Extrude -->
<g>
 <path d="M405.5,34 L414,25.3 L427.5,25.3 L419,34 Z" fill="#bfe6f8" stroke="#8fcbe6" stroke-width="0.8"/>
 <path d="M419,34 L427.5,25.3 L427.5,38.5 L419,47.5 Z" fill="#6cb6da" stroke="#5aa6cc" stroke-width="0.8"/>
 <rect x="405.5" y="34" width="13.5" height="13.5" fill="#f2f2f2" stroke="#b4b4b4" stroke-width="0.9"/>
</g>
<!-- Red box around Revolve -->
<rect x="439" y="22" width="51" height="17" fill="none" stroke="#e3101b" stroke-width="2"/>
<!-- Revolve icon -->
<g>
 <ellipse cx="443" cy="30.5" rx="2.6" ry="2.6" fill="#ffffff" stroke="#9dc8e0" stroke-width="1.2"/>
 <ellipse cx="447.5" cy="30.5" rx="2.6" ry="2.6" fill="#4aa8dc" stroke="#2a8cc6" stroke-width="1"/>
 <path d="M444.4,24 V38" stroke="#888" stroke-width="0.8" stroke-dasharray="1.5 1"/>
</g>
<!-- Sweep -->
<g>
 <path d="M438.5,50 L444,47 L451,47.5 L451,52 L444.5,55.5 L438.5,54 Z" fill="#c8d6de" stroke="#9aaab4" stroke-width="0.8"/>
 <path d="M441,51.5 L447,49.5 L451,50 L451,52.5 L444.5,55.5 L441,54.5 Z" fill="#8cc8e8"/>
</g>
<!-- Swept Blend -->
<g>
 <path d="M439,74 C440,69 445,65.5 450,64.5 L451.5,68 C447,69.5 443.5,72.5 442.5,76.5 Z" fill="#a4d8f2" stroke="#4a9ccc" stroke-width="0.8"/>
 <circle cx="440.8" cy="75" r="2.2" fill="#f4f4f4" stroke="#a8a8a8" stroke-width="0.8"/>
</g>
<!-- Hole (disabled) -->
<g fill="#ececec" stroke="#c6c6c6" stroke-width="0.9">
 <path d="M516.5,27.5 L519.5,24.7 L528.2,24.7 L528.2,33.5 L525.5,36.5 L516.5,36.5 Z"/>
 <path d="M519.5,36.5 V30 Q521,27.5 522.5,30 V36.5" fill="none"/>
</g>
<!-- Draft -->
<g>
 <path d="M584.5,30 L589,26 L596.5,33.5 L592,37 L584.5,37 Z" fill="#dff1fa" stroke="#7cc0e2" stroke-width="0.8"/>
 <path d="M589,25.5 L596.5,33.5 L592,36.8 L586.5,28 Z" fill="#9ed6f2" stroke="#3d9fd2" stroke-width="0.8"/>
</g>
<!-- Round -->
<g>
 <path d="M516.5,48.5 L520,45.5 L526,45.5 L528.5,49.5 L528.5,54.5 L525,57.5 L516.5,57.5 Z" fill="#eaeaea" stroke="#cfcfcf" stroke-width="0.8"/>
 <path d="M520,45.5 Q526,45 528.5,51.5 L525,55 Q523.5,49.5 517.5,48.5 Z" fill="#a6dcf5" stroke="#3d9fd2" stroke-width="0.8"/>
</g>
<!-- Chamfer -->
<g>
 <path d="M516.5,68.5 L520,65.5 L526,65.5 L528.5,69.5 L528.5,74.5 L525,77.5 L516.5,77.5 Z" fill="#eaeaea" stroke="#cfcfcf" stroke-width="0.8"/>
 <path d="M520,65.5 L528.5,71 L525,74.5 L517,68.5 Z" fill="#a6dcf5" stroke="#3d9fd2" stroke-width="0.8"/>
</g>
<!-- Shell (disabled) -->
<g fill="#ebebeb" stroke="#c8c8c8" stroke-width="0.9">
 <path d="M584.5,48 L587,45.5 L596.5,45.5 L596.5,55 L594,57.5 L584.5,57.5 Z"/>
 <rect x="587" y="48.5" width="6" height="6" fill="#d4d4d4" stroke="none"/>
</g>
<!-- Rib (disabled) -->
<g fill="#ececec" stroke="#c8c8c8" stroke-width="0.9">
 <path d="M584.5,69.5 L587,67 V72 L593,72 L596.5,66 V75 L593.5,77.5 H584.5 Z"/>
</g>
<!-- Pattern -->
<g>
 <path d="M645.5,27.5 L648,25 L668.5,25 L668.5,45.5 L666,48 Z" fill="#dcdcdc" stroke="#c4c4c4" stroke-width="0.8"/>
 <rect x="645.5" y="27.5" width="20.5" height="20.5" fill="#f0f0f0" stroke="#c8c8c8" stroke-width="0.9"/>
 <g fill="#8a8a8a">
  <rect x="649" y="31" width="2" height="2"/><rect x="654.8" y="31" width="2" height="2"/><rect x="660.5" y="31" width="2" height="2"/>
  <rect x="649" y="36.8" width="2" height="2"/><rect x="654.8" y="36.8" width="2" height="2"/><rect x="660.5" y="36.8" width="2" height="2"/>
  <rect x="649" y="42.5" width="2" height="2"/><rect x="654.8" y="42.5" width="2" height="2"/><rect x="660.5" y="42.5" width="2" height="2"/>
 </g>
</g>
<!-- Mirror (dis) -->
<g fill="none" stroke="#c8c8c8" stroke-width="1">
 <path d="M679,25.5 h3 v10 h-3 z"/><path d="M688,25.5 h2.5 v10 h-2.5 q-1.5,-5 0,-10z"/><path d="M684.8,24.5 v12" stroke-dasharray="1.5 1"/>
</g>
<!-- Trim (dis) -->
<g fill="none" stroke="#c8c8c8" stroke-width="1">
 <rect x="682.5" y="45.5" width="8" height="7"/><circle cx="681.5" cy="54" r="3.5"/>
</g>
<!-- Merge (dis) -->
<g fill="none" stroke="#c8c8c8" stroke-width="1">
 <rect x="682.5" y="65.5" width="8" height="7"/><circle cx="681.5" cy="74" r="3.5"/>
</g>
<!-- Extend (dis) -->
<g fill="#ececec" stroke="#c8c8c8" stroke-width="1">
 <rect x="727.5" y="24.5" width="11" height="11"/><path d="M731,30 h5 M734,28 l2,2 l-2,2" fill="none" stroke="#a8a8a8"/>
</g>
<!-- Offset (dis) -->
<g fill="#ececec" stroke="#c8c8c8" stroke-width="1">
 <path d="M727.5,45.5 h11 v11.5 h-11 z"/><path d="M731,56 v-5 l5,-4" fill="none" stroke="#b0b0b0" stroke-dasharray="1.5 1"/>
</g>
<!-- Intersect (dis) -->
<g fill="none" stroke="#c8c8c8" stroke-width="1">
 <rect x="731" y="65.5" width="7.5" height="7"/><circle cx="730.5" cy="74" r="3.5"/>
</g>
<!-- Project -->
<g>
 <path d="M782.5,35.5 L786,32.5 L795,32.5 L792,35.5 Z" fill="#e8e8e8" stroke="#b0b0b0" stroke-width="0.8"/>
 <path d="M783,27 Q785.5,24 788,27 Q790.5,30 794.5,26.5" fill="none" stroke="#8a8a8a" stroke-width="0.9"/>
 <path d="M783,33 Q785.5,30 788,32.5 Q790.5,35 794.5,31.5" fill="none" stroke="#4a48b0" stroke-width="1.2"/>
</g>
<!-- Thicken (dis) -->
<g fill="#ededed" stroke="#c8c8c8" stroke-width="1">
 <path d="M782.5,45.5 h12 v3 h-9 v6 h9 v3 h-12 z"/>
</g>
<!-- Solidify (dis) -->
<g fill="#ededed" stroke="#c8c8c8" stroke-width="1">
 <path d="M782.5,69 L786,66 L789,70 L794.5,64.5 V77.5 H784.5 V70" />
</g>
<!-- Boundary Blend -->
<g>
 <path d="M849.8,43.3 C850.5,36 852.5,30 856,27.5 C860,25.5 864.5,24.8 867.5,24.9 C870,25.5 872,27.5 873.3,30 C871,36 869.5,42 867.8,47.6 C862,45 856,43 849.8,43.3 Z" fill="#f2fafe" stroke="#a8acb0" stroke-width="0.9"/>
 <path d="M866,25.2 C862,30 859.5,35.5 858,41.8 C862,43 865,45 867.8,47.6 C869.5,42 871,36 873.3,30 C872,27.5 870,25.5 866,25.2 Z" fill="#c6e8f8"/>
 <path d="M866,25.2 C862,30 859.5,35.5 858,41.8" fill="none" stroke="#3a9ad0" stroke-width="1.2"/>
 <path d="M851,35.5 C857,34 865,34.5 872,33" fill="none" stroke="#9aa4aa" stroke-width="0.9"/>
 <path d="M873.3,30 C871,36 869.5,42 867.8,47.6" fill="none" stroke="#3a9ad0" stroke-width="1.4"/>
</g>
<!-- Fill -->
<rect x="890" y="25.2" width="10" height="9.8" fill="#c2e6f6" stroke="#3a94cc" stroke-width="1.3"/>
<path d="M891,27 h8 M891,29 h8 M891,31 h8 M891,33 h8" stroke="#e8f6fc" stroke-width="0.6"/>
<!-- Style -->
<path d="M888.8,48.5 Q894.5,44.5 900.2,48.5 L900.5,56.5 Q894.5,53 888.5,56.5 Z" fill="#bfe4f6" stroke="#6d8594" stroke-width="0.9"/>
<path d="M891.5,47.5 Q892.5,51 891.5,55" fill="none" stroke="#e8f8ff" stroke-width="1.2"/>
<!-- Freestyle -->
<g>
 <path d="M888.5,67.5 l2,-2 h10 v10 l-2,2 h-10 z" fill="none" stroke="#9a9a9a" stroke-width="0.8"/>
 <path d="M888.5,67.5 h10 v10 M898.5,67.5 l2,-2" fill="none" stroke="#9a9a9a" stroke-width="0.8"/>
 <circle cx="894.5" cy="71.3" r="3.8" fill="#7cc8ee" stroke="#3a94c8" stroke-width="0.9"/>
 <circle cx="893.3" cy="70.2" r="1.3" fill="#d8f2fc"/>
</g>
<!-- Component Interface -->
<g>
 <rect x="967.5" y="25" width="23.3" height="22.5" fill="#fdf0cf" stroke="#d2b27a" stroke-width="1"/>
 <path d="M973.4,25 H990.8 V42.4 H987.2 V41.2 Q987.2,40.2 988.6,39.6 Q990,38.6 988.8,37 Q986,35.4 982.4,37 Q981.2,38.6 982.6,39.6 Q984.2,40.2 984.2,41.2 V42.4 H973.4 V35.6 Q975.2,35.8 976.6,35.2 Q978.6,34 978.6,31.8 Q978.4,28.6 976.4,28.4 Q974.8,28.4 973.4,29.3 Z" fill="#d2eefb" stroke="#4aa6d8" stroke-width="1"/>
</g>
</svg>

<div class="arr" style="left:24.5px;top:71.5px;border-top-color:#424456;"></div>
<div class="arr" style="left:98.5px;top:50.0px;border-top-color:#b3b7bb;"></div>
<div class="arr" style="left:103.5px;top:70.0px;border-top-color:#b3b7bb;"></div>
<div class="arr" style="left:76.5px;top:91.0px;border-top-color:#424456;"></div>
<div class="arr" style="left:186.5px;top:91.0px;border-top-color:#424456;"></div>
<div class="arr" style="left:306.0px;top:50.0px;border-top-color:#424456;"></div>
<div class="arr" style="left:324.5px;top:91.0px;border-top-color:#424456;"></div>
<div class="arr" style="left:486.5px;top:50.0px;border-top-color:#424456;"></div>
<div class="arr" style="left:465.5px;top:91.0px;border-top-color:#424456;"></div>
<div class="arr" style="left:624.0px;top:29.0px;border-top-color:#424456;"></div>
<div class="arr" style="left:564.0px;top:50.0px;border-top-color:#424456;"></div>
<div class="arr" style="left:572.0px;top:70.0px;border-top-color:#424456;"></div>
<div class="arr" style="left:618.0px;top:70.0px;border-top-color:#b3b7bb;"></div>
<div class="arr" style="left:596.5px;top:91.0px;border-top-color:#424456;"></div>
<div class="arr" style="left:653.8px;top:71.6px;border-top-color:#424456;"></div>
<div class="arr" style="left:749.7px;top:90.5px;border-top-color:#424456;"></div>
<div class="arr" style="left:906.5px;top:91.0px;border-top-color:#424456;"></div>
<div class="arr" style="left:1004.5px;top:91.0px;border-top-color:#424456;"></div>
<div class="t" style="left:14.4px;top:6px;font-size:10px;color:#ffffff;transform:scaleX(0.894);">File</div>
<div class="t" style="left:62.5px;top:6px;font-size:10px;color:#52644a;transform:scaleX(1.096);">Model</div>
<div class="t" style="left:128.3px;top:6px;font-size:10px;color:#ffffff;transform:scaleX(0.960);">Analysis</div>
<div class="t" style="left:200.1px;top:6px;font-size:10px;color:#ffffff;transform:scaleX(1.000);">Live Simulation</div>
<div class="t" style="left:303.5px;top:6px;font-size:10px;color:#ffffff;transform:scaleX(1.006);">Annotate</div>
<div class="t" style="left:380.3px;top:6px;font-size:10px;color:#ffffff;transform:scaleX(1.077);">Tools</div>
<div class="t" style="left:440.8px;top:6px;font-size:10px;color:#ffffff;transform:scaleX(1.053);">View</div>
<div class="t" style="left:498.5px;top:6px;font-size:10px;color:#ffffff;transform:scaleX(1.040);">Flexible Modeling</div>
<div class="t" style="left:615.1px;top:6px;font-size:10px;color:#ffffff;transform:scaleX(1.022);">Applications</div>
<div class="t" style="left:4.7px;top:58px;font-size:10px;color:#424456;transform:scaleX(0.874);">Regenerate</div>
<div class="t" style="left:71.4px;top:26px;font-size:10px;color:#b3b7bb;transform:scaleX(0.971);">Copy</div>
<div class="t" style="left:71.4px;top:47px;font-size:10px;color:#b3b7bb;transform:scaleX(0.884);">Paste</div>
<div class="t" style="left:71.4px;top:67px;font-size:10px;color:#b3b7bb;transform:scaleX(0.907);">Delete</div>
<div class="t" style="left:29.8px;top:89px;font-size:10px;color:#424456;transform:scaleX(0.931);">Operations</div>
<div class="t" style="left:135.4px;top:26px;font-size:10px;color:#424456;transform:scaleX(0.899);">User-Defined Feature</div>
<div class="t" style="left:135.3px;top:47px;font-size:10px;color:#424456;transform:scaleX(0.922);">Copy Geometry</div>
<div class="t" style="left:135.3px;top:67px;font-size:10px;color:#424456;transform:scaleX(0.918);">Shrinkwrap</div>
<div class="t" style="left:149.5px;top:89px;font-size:10px;color:#424456;transform:scaleX(0.874);">Get Data</div>
<div class="t" style="left:233.6px;top:58px;font-size:10px;color:#424456;transform:scaleX(0.888);">Plane</div>
<div class="t" style="left:279.1px;top:26px;font-size:10px;color:#424456;transform:scaleX(0.911);">Axis</div>
<div class="t" style="left:279.6px;top:47px;font-size:10px;color:#424456;transform:scaleX(0.955);">Point</div>
<div class="t" style="left:279.6px;top:67px;font-size:10px;color:#424456;transform:scaleX(0.914);">Coordinate System</div>
<div class="t" style="left:362.6px;top:58px;font-size:10px;color:#424456;transform:scaleX(0.907);">Sketch</div>
<div class="t" style="left:293.6px;top:89px;font-size:10px;color:#424456;transform:scaleX(0.942);">Datum</div>
<div class="t" style="left:402.1px;top:58px;font-size:10px;color:#424456;transform:scaleX(0.891);">Extrude</div>
<div class="t" style="left:453.6px;top:26px;font-size:10px;color:#424456;transform:scaleX(0.905);">Revolve</div>
<div class="t" style="left:453.7px;top:47px;font-size:10px;color:#424456;transform:scaleX(0.873);">Sweep</div>
<div class="t" style="left:453.6px;top:67px;font-size:10px;color:#424456;transform:scaleX(0.903);">Swept Blend</div>
<div class="t" style="left:434.7px;top:89px;font-size:10px;color:#424456;transform:scaleX(0.845);">Shapes</div>
<div class="t" style="left:531.1px;top:26px;font-size:10px;color:#b3b7bb;transform:scaleX(0.986);">Hole</div>
<div class="t" style="left:531.1px;top:47px;font-size:10px;color:#424456;transform:scaleX(0.924);">Round</div>
<div class="t" style="left:531.1px;top:67px;font-size:10px;color:#424456;transform:scaleX(0.945);">Chamfer</div>
<div class="t" style="left:599.6px;top:26px;font-size:10px;color:#424456;transform:scaleX(0.958);">Draft</div>
<div class="t" style="left:599.6px;top:47px;font-size:10px;color:#b3b7bb;transform:scaleX(0.886);">Shell</div>
<div class="t" style="left:599.7px;top:67px;font-size:10px;color:#b3b7bb;transform:scaleX(0.844);">Rib</div>
<div class="t" style="left:544.6px;top:89px;font-size:10px;color:#424456;transform:scaleX(0.913);">Engineering</div>
<div class="t" style="left:642.4px;top:58px;font-size:10px;color:#424456;transform:scaleX(0.919);">Pattern</div>
<div class="t" style="left:693.2px;top:26px;font-size:10px;color:#b3b7bb;transform:scaleX(1.000);">Mirror</div>
<div class="t" style="left:693.2px;top:47px;font-size:10px;color:#b3b7bb;transform:scaleX(1.031);">Trim</div>
<div class="t" style="left:693.2px;top:67px;font-size:10px;color:#b3b7bb;transform:scaleX(0.958);">Merge</div>
<div class="t" style="left:741.1px;top:26px;font-size:10px;color:#b3b7bb;transform:scaleX(0.887);">Extend</div>
<div class="t" style="left:741.1px;top:47px;font-size:10px;color:#b3b7bb;transform:scaleX(0.953);">Offset</div>
<div class="t" style="left:741.1px;top:67px;font-size:10px;color:#b3b7bb;transform:scaleX(0.921);">Intersect</div>
<div class="t" style="left:798.2px;top:26px;font-size:10px;color:#424456;transform:scaleX(0.923);">Project</div>
<div class="t" style="left:798.2px;top:47px;font-size:10px;color:#b3b7bb;transform:scaleX(0.929);">Thicken</div>
<div class="t" style="left:798.2px;top:67px;font-size:10px;color:#b3b7bb;transform:scaleX(0.941);">Solidify</div>
<div class="t" style="left:718.0px;top:89px;font-size:10px;color:#424456;transform:scaleX(0.829);">Editing</div>
<div class="t" style="left:841.6px;top:58px;font-size:10px;color:#424456;transform:scaleX(0.952);">Boundary</div>
<div class="t" style="left:849.6px;top:69px;font-size:10px;color:#424456;transform:scaleX(0.928);">Blend</div>
<div class="t" style="left:902.6px;top:26px;font-size:10px;color:#424456;transform:scaleX(1.002);">Fill</div>
<div class="t" style="left:902.6px;top:47px;font-size:10px;color:#424456;transform:scaleX(0.933);">Style</div>
<div class="t" style="left:902.6px;top:67px;font-size:10px;color:#424456;transform:scaleX(0.893);">Freestyle</div>
<div class="t" style="left:868.6px;top:89px;font-size:10px;color:#424456;transform:scaleX(0.879);">Surfaces</div>
<div class="t" style="left:954.6px;top:58px;font-size:10px;color:#424456;transform:scaleX(0.963);">Component</div>
<div class="t" style="left:961.6px;top:69px;font-size:10px;color:#424456;transform:scaleX(0.944);">Interface</div>
<div class="t" style="left:948.6px;top:89px;font-size:10px;color:#424456;transform:scaleX(0.977);">Model Intent</div>
<div class="t" style="left:22.3px;top:110px;font-size:10px;color:#46485a;transform:scaleX(0.951);">Model Tree</div>
<div class="t" style="left:100.6px;top:110px;font-size:10px;color:#46485a;transform:scaleX(0.883);">Folder Browse</div>
<div class="t" style="left:187.8px;top:110px;font-size:10px;color:#46485a;transform:scaleX(0.890);">Favorites</div>
<div class="t" style="left:20.4px;top:132px;font-size:10px;color:#2e303c;transform:scaleX(0.945);font-weight:bold;">Model Tree</div>
<div class="t" style="left:24.0px;top:175px;font-size:9.5px;color:#46485a;transform:scaleX(0.808);">EXTRUSIONSCREW.PRT</div>
<div class="t" style="left:39.7px;top:190px;font-size:9.5px;color:#46485a;transform:scaleX(0.802);">RIGHT</div>
<div class="t" style="left:39.7px;top:206px;font-size:9.5px;color:#46485a;transform:scaleX(0.801);">TOP</div>
<div class="t" style="left:39.7px;top:221px;font-size:9.5px;color:#46485a;transform:scaleX(0.826);">FRONT</div>
<div class="t" style="left:39.7px;top:237px;font-size:9.5px;color:#46485a;transform:scaleX(0.743);">PRT_CSYS_DEF</div>
<div class="t" style="left:39.7px;top:252px;font-size:9.5px;color:#46485a;transform:scaleX(0.860);">Revolve 1</div>
<div class="t" style="left:39.7px;top:268px;font-size:9.5px;color:#46485a;transform:scaleX(0.868);">Revolve 2</div>
<div class="t" style="left:39.7px;top:283px;font-size:9.5px;color:#46485a;transform:scaleX(0.898);">Helical Sweep 1</div>
<div class="t" style="left:39.6px;top:299px;font-size:9.5px;color:#46485a;transform:scaleX(0.924);">Merge 1</div>
<div class="t" style="left:39.7px;top:314px;font-size:9.5px;color:#46485a;transform:scaleX(0.889);">Extrude 1</div>
<div class="t" style="left:39.6px;top:330px;font-size:9.5px;color:#46485a;transform:scaleX(0.924);">Merge 2</div>
<div class="a" style="left:140px;top:107px;width:18px;height:14px;background:linear-gradient(90deg, rgba(221,226,228,0), #dde2e4 80%);"></div>

</div></body></html>
